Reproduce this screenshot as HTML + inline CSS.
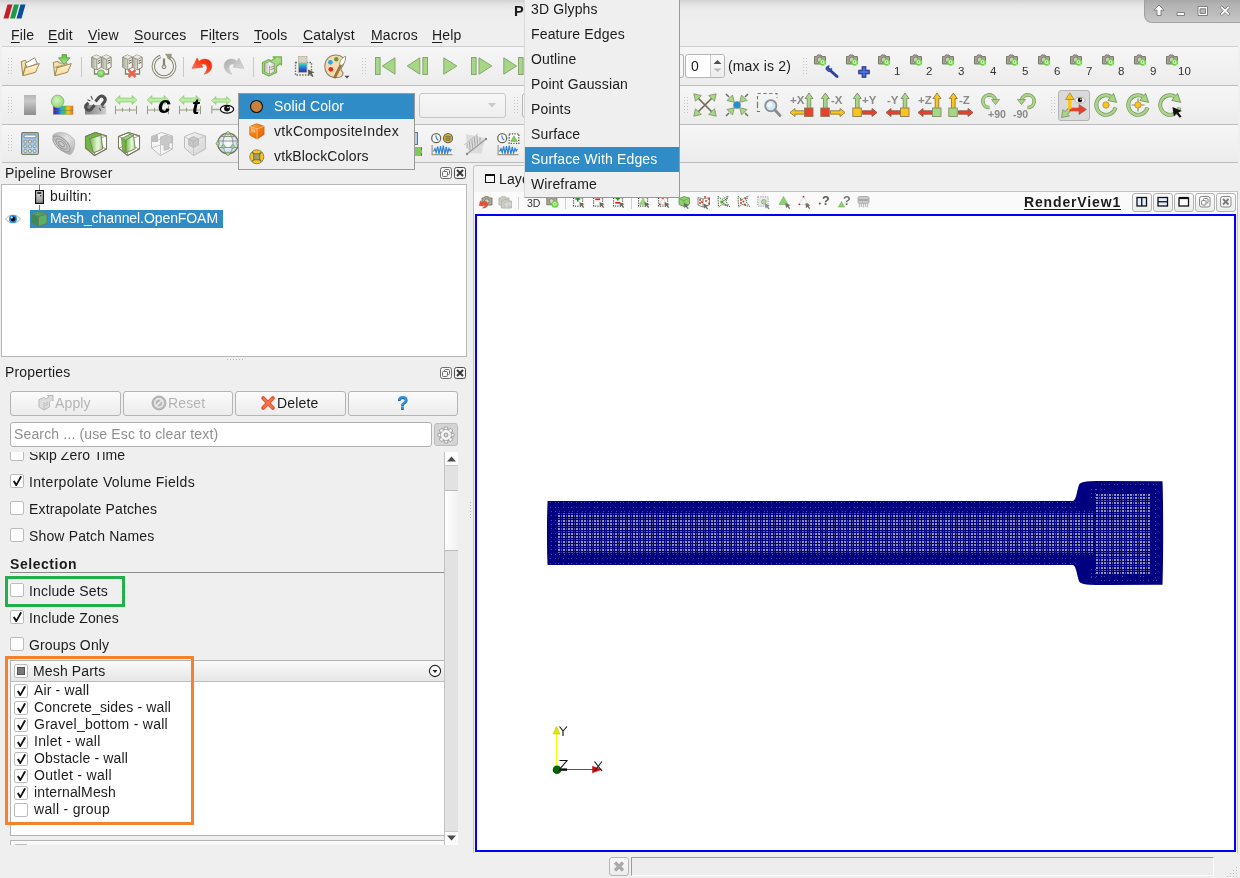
<!DOCTYPE html>
<html><head><meta charset="utf-8">
<style>
*{box-sizing:border-box;margin:0;padding:0}
html,body{width:1240px;height:878px;overflow:hidden;background:#efefef;font-family:"Liberation Sans",sans-serif;font-size:14px;letter-spacing:.15px;color:#1c1c1c}
.a{position:absolute}
.t{position:absolute;white-space:nowrap;line-height:16px;height:16px}
u{text-decoration:underline;text-underline-offset:2px;text-decoration-thickness:1px}
.hl{position:absolute;height:1px;background:#bdbdbd}
.hl2{position:absolute;height:1px;background:#fbfbfb}
svg{position:absolute;overflow:visible}
.btn{position:absolute;border:1px solid #b4b4b4;border-radius:3px;background:linear-gradient(#fbfbfb,#ececec)}
.cb{position:absolute;width:14px;height:14px;border:1px solid #bcbcbc;border-radius:2px;background:#fff}
.cb.c::after{content:"";position:absolute;left:2px;top:1px;width:9px;height:10px;background:#111;clip-path:polygon(0% 55%,18% 45%,38% 72%,80% 0%,100% 8%,42% 100%,30% 100%)}
.grip{position:absolute;width:5px;height:19px;background-image:radial-gradient(circle,#c4c4c4 0.7px,transparent 0.9px);background-size:3px 3px;}
.sel{background:#308cc6;color:#fff}
</style></head><body>
<div id="root" style="position:absolute;left:0;top:0;width:1240px;height:878px;will-change:transform">
<!-- TITLEBAR -->
<div class="a" id="titlebar" style="left:0;top:0;width:1240px;height:26px;background:linear-gradient(#d2d2d2 0,#e2e2e2 4px,#ececec 10px,#efefef 100%)"></div>
<svg style="left:3px;top:4px" width="24" height="16" viewBox="0 0 24 16"><path d="M4.5 0.5h5L5.5 14.5h-5z" fill="#c0202c"/><path d="M11 0.5h5L12 14.5h-5z" fill="#1d9a48"/><path d="M17.5 0.5h5L18.5 14.5h-5z" fill="#0a4f9e"/></svg>
<span class="t" style="left:514px;top:3px;font-weight:bold;font-size:14.6px">Pa</span>
<div class="a" style="left:1144px;top:0;width:96px;height:23px;background:linear-gradient(#a8a8a8,#b4b4b4 25%,#bcbcbc 60%,#c8c8c8);border-bottom-left-radius:8px;border-left:1px solid #9e9e9e;border-bottom:1px solid #a2a2a2"></div>
<svg style="left:1152px;top:3px" width="84" height="17" viewBox="0 0 84 17" fill="#fff" stroke="#777" stroke-width=".9" stroke-linejoin="round"><path d="M7 2L12 7.200H9V12.500H5V7.200H2z"/><rect x="25" y="9.500" width="7.500" height="3"/><path d="M46 3.500h9.500v9H46zM48 5.800v4.600h5.500V5.800z" fill-rule="evenodd"/><path d="M68 4.500L69.800 2.800L73 6L76.200 2.800L78 4.500L74.800 7.700L78 11L76.200 12.700L73 9.500L69.800 12.700L68 11L71.200 7.700z"/></svg>
<!-- MENUBAR -->
<div id="menubar">
<span class="t" style="left:11px;top:27px"><u>F</u>ile</span>
<span class="t" style="left:48px;top:27px"><u>E</u>dit</span>
<span class="t" style="left:88px;top:27px"><u>V</u>iew</span>
<span class="t" style="left:134px;top:27px"><u>S</u>ources</span>
<span class="t" style="left:200px;top:27px">Fi<u>l</u>ters</span>
<span class="t" style="left:254px;top:27px"><u>T</u>ools</span>
<span class="t" style="left:303px;top:27px"><u>C</u>atalyst</span>
<span class="t" style="left:371px;top:27px"><u>M</u>acros</span>
<span class="t" style="left:432px;top:27px"><u>H</u>elp</span>
</div>
<!-- TOOLBARS -->
<div id="toolbars">
<div class="a" style="left:2px;top:47px;width:1236px;height:38px;background:linear-gradient(#f6f6f6,#ececec)"></div>
<div class="a" style="left:2px;top:86px;width:1236px;height:38px;background:linear-gradient(#f6f6f6,#ececec)"></div>
<div class="a" style="left:2px;top:125px;width:1236px;height:37px;background:linear-gradient(#f6f6f6,#ececec)"></div>
<div class="hl" style="left:2px;top:46px;width:1236px;background:#cfcfcf"></div>
<div class="hl" style="left:2px;top:85px;width:1236px"></div>
<div class="hl" style="left:2px;top:124px;width:1236px"></div>
<div class="hl" style="left:2px;top:162px;width:1236px"></div>
<div class="grip" style="left:7px;top:57px"></div>
<div class="grip" style="left:7px;top:96px"></div>
<div class="grip" style="left:7px;top:134px"></div>
<div class="grip" style="left:361px;top:57px"></div>
<div class="grip" style="left:802px;top:57px"></div>
<div class="grip" style="left:683px;top:96px"></div>
<div class="grip" style="left:1050px;top:96px"></div>
<div class="grip" style="left:513px;top:96px"></div>
<!--TB1-->
<svg width="0" height="0" style="left:0;top:0"><defs>
<linearGradient id="gFold" x1="0" y1="0" x2="0" y2="1"><stop offset="0" stop-color="#fef4da"/><stop offset="1" stop-color="#fcd88c"/></linearGradient>
<linearGradient id="gSrv" x1="0" y1="0" x2="1" y2="0"><stop offset="0" stop-color="#b9b9a8"/><stop offset=".5" stop-color="#f4f4f0"/><stop offset="1" stop-color="#d3d3c6"/></linearGradient>
<radialGradient id="gGreenBall" cx=".45" cy=".4" r=".6"><stop offset="0" stop-color="#b5ec9a"/><stop offset="1" stop-color="#63c23f"/></radialGradient>
<linearGradient id="gGreenArr" x1="0" y1="0" x2="0" y2="1"><stop offset="0" stop-color="#4fc22b"/><stop offset="1" stop-color="#b7e7a2"/></linearGradient>
<linearGradient id="gRed" x1="0" y1="1" x2="1" y2="0"><stop offset="0" stop-color="#ff8c7a"/><stop offset=".6" stop-color="#ff3a14"/><stop offset="1" stop-color="#e02800"/></linearGradient>
<linearGradient id="gGrey" x1="0" y1="0" x2="1" y2="1"><stop offset="0" stop-color="#a9a9a9"/><stop offset="1" stop-color="#e4e4e4"/></linearGradient>
<linearGradient id="gJet" x1="0" y1="0" x2="0" y2="1"><stop offset="0" stop-color="#7fd88a"/><stop offset=".3" stop-color="#19b5d8"/><stop offset=".65" stop-color="#1f5fd0"/><stop offset="1" stop-color="#4b2d9a"/></linearGradient>
<g id="srv2">
 <path d="M3.500 14V20H17.500V14" fill="#fff" stroke="#80806a" stroke-width="1.300"/>
 <g id="twr"><path d="M.7 3.200L5.300 1L10.300 3.200V13.300L5.800 15.800L.7 13.300z" fill="#f6f6f2" stroke="#80806a" stroke-width="1" stroke-linejoin="round"/><path d="M.7 3.200L5.800 5.400V15.800L.7 13.300z" fill="url(#gSrvS)"/><path d="M.7 3.200L5.300 1L10.300 3.200L5.800 5.400z" fill="#e9e9e2"/><path d="M.7 3.200L5.800 5.400L10.300 3.200M5.800 5.400V15.800" fill="none" stroke="#80806a" stroke-width=".8"/><path d="M6.800 7.300l2.700-1.300M6.800 9.600l2.700-1.300" stroke="#6f6f5a" stroke-width="1.100"/></g>
 <use href="#twr" x="9.800"/>
</g>
<linearGradient id="gSrvS" x1="0" y1="0" x2="1" y2="0"><stop offset="0" stop-color="#a9a998"/><stop offset="1" stop-color="#dcdcd2"/></linearGradient>
<g id="vcrbar"><rect x=".5" y=".5" width="4.6" height="17" fill="#a5d785" stroke="#8ba374" stroke-width="1"/></g>
</defs></svg>
<!-- open -->
<svg style="left:18px;top:54px" width="24" height="24" viewBox="0 0 24 24">
 <path d="M3.2 7.5L7.5 6.3L8.5 8L4.8 21.2z" fill="#f8dfa6" stroke="#978b60" stroke-width="1"/>
 <path d="M7 9.5L16.5 3.8L19.5 9.5L9 13.5z" fill="#fff" stroke="#978b60" stroke-width="1"/>
 <path d="M7.2 13.8L21.3 9.6L17.5 18.3L4.8 21.8z" fill="url(#gFold)" stroke="#978b60" stroke-width="1" stroke-linejoin="round"/>
</svg>
<!-- open recent -->
<svg style="left:50px;top:54px" width="24" height="24" viewBox="0 0 24 24">
 <path d="M3.2 8.5L8 7.3L9 9H17V12L4.8 21.2z" fill="#f8dfa6" stroke="#978b60" stroke-width="1"/>
 <path d="M5.5 13.2L15 10.5V13z" fill="#fff" stroke="#978b60" stroke-width=".8"/>
 <path d="M7.2 13.8L21.3 9.6L17.5 18.3L4.8 21.8z" fill="url(#gFold)" stroke="#978b60" stroke-width="1" stroke-linejoin="round"/>
 <path d="M12 0.6h4.5V3.8H20L14.2 10.3L8.5 3.8H12z" fill="url(#gGreenArr)" stroke="#6f9a52" stroke-width=".9"/>
</svg>
<div class="a" style="left:81px;top:57px;width:1px;height:20px;background:#c9c9c9"></div>
<!-- connect -->
<svg style="left:90px;top:54px" width="22" height="24" viewBox="0 0 20 24"><use href="#srv2"/><circle cx="10" cy="19.5" r="3.7" fill="url(#gGreenBall)" stroke="#8aa870" stroke-width=".8"/></svg>
<!-- disconnect -->
<svg style="left:121px;top:54px" width="22" height="24" viewBox="0 0 20 24"><use href="#srv2"/><path d="M6.5 16l7 7M13.5 16l-7 7" stroke="#f0604a" stroke-width="2.6"/></svg>
<!-- timer -->
<svg style="left:151px;top:53px" width="26" height="26" viewBox="0 0 26 26" fill="none">
 <path d="M16.5 3.3A10.6 10.6 0 1 1 9.5 3.3" stroke="#85856f" stroke-width="3.4"/>
 <path d="M16.5 3.3A10.6 10.6 0 1 1 9.5 3.3" stroke="#f4f4ee" stroke-width="1.4"/>
 <path d="M14.5 1.2h6l-1.5 5.3z" fill="#9a9a84" stroke="#85856f" stroke-width=".6"/>
 <path d="M13 5.5v7.5" stroke="#85856f" stroke-width="2.2"/><circle cx="13" cy="13.8" r="1.9" fill="#d9d9cc" stroke="#85856f" stroke-width="1"/>
</svg>
<div class="a" style="left:183px;top:57px;width:1px;height:20px;background:#c9c9c9"></div>
<!-- undo -->
<svg style="left:190px;top:54px" width="24" height="24" viewBox="0 0 24 24"><path d="M2 14.500L7 4L9.200 7.200C13 3.500 21.500 4.500 21.800 11.500C22 16 18.500 19.500 14 20.200C16.500 17.500 17.500 14.500 16.800 12.500C16 10 13.500 9.500 11.300 10.600L13 13.200z" fill="url(#gRed)" stroke="#d0553a" stroke-width=".5"/></svg>
<!-- redo -->
<svg style="left:222px;top:54px" width="24" height="24" viewBox="0 0 24 24"><path d="M22 14.5 L17 4 L14.8 7.2 C11 3.5 2.5 4.5 2.2 11.5 C2 16 5.5 19.5 10 20.2 C7.5 17.5 6.5 14.5 7.2 12.5 C8 10 10.5 9.5 12.7 10.6 L11 13.2 z" fill="url(#gGrey)" stroke="#b9b9b9" stroke-width=".5"/></svg>
<div class="a" style="left:253px;top:57px;width:1px;height:20px;background:#c9c9c9"></div>
<!-- extract -->
<svg style="left:260px;top:54px" width="24" height="24" viewBox="0 0 24 24">
 <path d="M2.5 8.5L9 5.5L11 7L15 4.2L13 2.8H21.5V11L20 9.5L16.5 12.5V18.5L9 22L2.5 19z" fill="#a6da84" stroke="#72b548" stroke-width="1.2" stroke-linejoin="round"/>
 <path d="M4.5 9.5L9.5 7.5L14.5 9.5V18L9.5 20.200L4.500 18z" fill="url(#gSrv)" stroke="#8a8a78" stroke-width=".7"/>
 <path d="M9.5 11.5v8.500" stroke="#d06a6a" stroke-width=".7"/><path d="M10.5 13.300l3.500-1.300M10.500 15.600l3.500-1.300" stroke="#8a8a78" stroke-width=".9"/>
</svg>
<!-- color legend edit -->
<svg style="left:292px;top:54px" width="24" height="24" viewBox="0 0 24 24">
 <rect x="3.500" y="8.500" width="16" height="12.500" fill="none" stroke="#6e6e5c" stroke-width="1.400" stroke-dasharray="1.500 1.300"/>
 <rect x="6.500" y="8.500" width="8.500" height="10" fill="url(#gJet)"/><rect x="6.500" y="2.500" width="8.500" height="6" fill="#dbd3c0"/>
 <rect x="6.500" y="2.500" width="8.500" height="16" fill="none" stroke="#b9b4a3" stroke-width=".8"/>
 <path d="M16 15.500l6.500 3l-2.800.8l1.800 3l-1.400.8l-1.800-3l-2 2z" fill="#5e5e4c"/>
</svg>
<!-- palette -->
<svg style="left:323px;top:53px" width="28" height="27" viewBox="0 0 28 27">
 <path d="M12 2C18 1.500 21.500 5 21 9.500C20.600 13 18 14 18 16.500C18 18.500 20.500 18.500 20 21C19.500 23.500 16 24.800 12 24.500C5.500 24 1.800 19.500 1.800 13.500C1.800 7 6 2.500 12 2z" fill="#f6dbb0" stroke="#8d8569" stroke-width="1.100"/>
 <circle cx="7.400" cy="9.300" r="2.400" fill="#2aa6e0"/><circle cx="13.300" cy="6.200" r="2.200" fill="#5c9c32"/><circle cx="7.800" cy="16.300" r="2.400" fill="#e6281e"/>
 <path d="M10.500 24.500L17 11.500L18.800 12.500L12.500 25.300z" fill="#a9772f" stroke="#7d6a45" stroke-width=".6"/>
 <path d="M16.800 11.500C16.500 8 18.500 5 22.500 3.300C23 7 21.500 10.500 18.800 12.500z" fill="#fff" stroke="#8d8569" stroke-width=".9"/>
 <path d="M21.500 22.800h5l-2.500 2.600z" fill="#4a4a4a"/>
</svg>
<!-- VCR -->
<svg style="left:375px;top:57px" width="21" height="18" viewBox="0 0 21 18"><use href="#vcrbar"/><path d="M20 .8V17.200L7.300 9z" fill="#a5d785" stroke="#8ba374" stroke-width="1"/></svg>
<svg style="left:406px;top:57px" width="22" height="18" viewBox="0 0 22 18"><use href="#vcrbar" x="16.400"/><path d="M13.800 .8V17.200L1.200 9z" fill="#a5d785" stroke="#8ba374" stroke-width="1"/></svg>
<svg style="left:443px;top:57px" width="15" height="18" viewBox="0 0 15 18"><path d="M.8 .8V17.200L13.800 9z" fill="#a5d785" stroke="#8ba374" stroke-width="1"/></svg>
<svg style="left:471px;top:57px" width="22" height="18" viewBox="0 0 22 18"><use href="#vcrbar"/><path d="M8 .8V17.200L20.800 9z" fill="#a5d785" stroke="#8ba374" stroke-width="1"/></svg>
<svg style="left:503px;top:57px" width="21" height="18" viewBox="0 0 21 18"><path d="M.8 .8V17.200L13.500 9z" fill="#a5d785" stroke="#8ba374" stroke-width="1"/><use href="#vcrbar" x="15"/></svg>
<!--TB1b-->
<svg width="0" height="0" style="left:0;top:0"><defs>
<g id="cam"><path d="M.5 2.500h2.200l.8-1.500h3.500l.8 1.500h3.700v7.500H.5z" fill="#a3a38f" stroke="#7b7b66" stroke-width="1"/><circle cx="5.800" cy="5.800" r="2.700" fill="#c9c9bb" stroke="#7b7b66" stroke-width=".9"/><circle cx="8.800" cy="8.400" r="3.300" fill="#6fd24a"/><circle cx="8.500" cy="8" r="1.500" fill="none" stroke="#eaffdf" stroke-width=".9"/><path d="M9.600 9.200l1.500 1.500" stroke="#eaffdf" stroke-width="1"/></g>
</defs></svg>
<div class="a" style="left:680px;top:54px;width:4px;height:24px;border:1px solid #b4b4b4;border-left:none;border-radius:0 3px 3px 0;background:#f6f6f6"></div>
<div class="a" style="left:685px;top:54px;width:40px;height:24px;border:1px solid #b4b4b4;border-radius:3px;background:#fff"></div>
<div class="a" style="left:710px;top:55px;width:14px;height:22px;border-left:1px solid #c9c9c9;background:linear-gradient(#fbfbfb,#ececec);border-radius:0 2px 2px 0"></div>
<svg style="left:713px;top:59px" width="9" height="14" viewBox="0 0 9 14"><path d="M.5 5L4.500 1L8.500 5z" fill="#4d4d4d"/><path d="M.5 9.500L4.500 13L8.500 9.500z" fill="#b9b9b9"/></svg>
<span class="t" style="left:691px;top:58px">0</span>
<span class="t" style="left:728px;top:58px">(max is 2)</span>
<svg style="left:814px;top:54px" width="14" height="13" viewBox="0 0 14 13"><use href="#cam"/></svg>
<svg style="left:846px;top:54px" width="14" height="13" viewBox="0 0 14 13"><use href="#cam"/></svg>
<svg style="left:878px;top:54px" width="14" height="13" viewBox="0 0 14 13"><use href="#cam"/></svg>
<svg style="left:910px;top:54px" width="14" height="13" viewBox="0 0 14 13"><use href="#cam"/></svg>
<svg style="left:942px;top:54px" width="14" height="13" viewBox="0 0 14 13"><use href="#cam"/></svg>
<svg style="left:974px;top:54px" width="14" height="13" viewBox="0 0 14 13"><use href="#cam"/></svg>
<svg style="left:1006px;top:54px" width="14" height="13" viewBox="0 0 14 13"><use href="#cam"/></svg>
<svg style="left:1038px;top:54px" width="14" height="13" viewBox="0 0 14 13"><use href="#cam"/></svg>
<svg style="left:1070px;top:54px" width="14" height="13" viewBox="0 0 14 13"><use href="#cam"/></svg>
<svg style="left:1102px;top:54px" width="14" height="13" viewBox="0 0 14 13"><use href="#cam"/></svg>
<svg style="left:1134px;top:54px" width="14" height="13" viewBox="0 0 14 13"><use href="#cam"/></svg>
<svg style="left:1166px;top:54px" width="14" height="13" viewBox="0 0 14 13"><use href="#cam"/></svg>
<svg style="left:825px;top:65px" width="15" height="14" viewBox="0 0 15 14"><path d="M2.500 3l9.500 8.500" stroke="#2c3f9e" stroke-width="3" stroke-linecap="round"/><path d="M1 4.500A3 3 0 0 1 4.500 .8L3 3l1.500 1.500L6.800 3.200A3 3 0 0 1 3 6.500z" fill="#3b56c4" stroke="#22307e" stroke-width=".6"/></svg>
<svg style="left:858px;top:66px" width="12" height="12" viewBox="0 0 12 12"><path d="M4.200 .8h3.600v3.400h3.400v3.600H7.800v3.400H4.200V7.800H.8V4.200h3.400z" fill="#4d6fdc" stroke="#1f2c86" stroke-width="1.100"/></svg>
<span class="t" style="left:894px;top:63px;font-size:11.500px;letter-spacing:0;color:#333">1</span>
<span class="t" style="left:926px;top:63px;font-size:11.500px;letter-spacing:0;color:#333">2</span>
<span class="t" style="left:958px;top:63px;font-size:11.500px;letter-spacing:0;color:#333">3</span>
<span class="t" style="left:990px;top:63px;font-size:11.500px;letter-spacing:0;color:#333">4</span>
<span class="t" style="left:1022px;top:63px;font-size:11.500px;letter-spacing:0;color:#333">5</span>
<span class="t" style="left:1054px;top:63px;font-size:11.500px;letter-spacing:0;color:#333">6</span>
<span class="t" style="left:1086px;top:63px;font-size:11.500px;letter-spacing:0;color:#333">7</span>
<span class="t" style="left:1118px;top:63px;font-size:11.500px;letter-spacing:0;color:#333">8</span>
<span class="t" style="left:1150px;top:63px;font-size:11.500px;letter-spacing:0;color:#333">9</span>
<span class="t" style="left:1178px;top:63px;font-size:11.500px;letter-spacing:0;color:#333">10</span>
<!--/TB1-->
<!--TB2-->
<svg width="0" height="0" style="left:0;top:0"><defs>
<linearGradient id="gDis" x1="0" y1="0" x2="0" y2="1"><stop offset="0" stop-color="#b5b5b5"/><stop offset=".3" stop-color="#c9c9c9"/><stop offset="1" stop-color="#8c8c8c"/></linearGradient>
<linearGradient id="gRain" x1="0" y1="0" x2="1" y2="0"><stop offset="0" stop-color="#5a1aa0"/><stop offset=".22" stop-color="#1d4fd8"/><stop offset=".42" stop-color="#18b4e8"/><stop offset=".58" stop-color="#4fbf3a"/><stop offset=".75" stop-color="#f4c818"/><stop offset="1" stop-color="#f46a12"/></linearGradient>
<linearGradient id="gArrG" x1="0" y1="0" x2="0" y2="1"><stop offset="0" stop-color="#7fd25c"/><stop offset=".5" stop-color="#c4efae"/><stop offset="1" stop-color="#7fd25c"/></linearGradient>
<radialGradient id="gGreenBall2" cx=".45" cy=".4" r=".65"><stop offset="0" stop-color="#d2f3c2"/><stop offset="1" stop-color="#8fd56e"/></radialGradient><g id="resc"><path d="M.5 5L5.500 .5V3h12V.5L22.500 5L17.500 9.500V7h-12v2.500z" fill="url(#gArrG)" stroke="#8fce72" stroke-width=".6"/><path d="M1 15h21M1 10.800v8.400M22 10.800v8.400M8 12.800v4M15 12.800v4" stroke="#9a9a86" stroke-width="1" fill="none"/></g>
<g id="upG"><path d="M4.500 .5L8.500 6H6.300V16H2.700V6H.5z" fill="#a5d785" stroke="#7d8f68" stroke-width=".9"/></g>
<g id="upY"><path d="M4.500 .5L8.500 6H6.300V16H2.700V6H.5z" fill="#fcc419" stroke="#8a7a4a" stroke-width=".9"/></g>
<g id="arY"><path d="M.5 4.500L5.500 .5V2.800H15V6.200H5.500V8.500z" fill="#fcc419" stroke="#8a7a4a" stroke-width=".9"/></g>
<g id="arR"><path d="M.5 4.500L5.500 .5V2.800H15V6.200H5.500V8.500z" fill="#e8402c" stroke="#8a5a4a" stroke-width=".9"/></g>
<g id="ring"><path d="M21.500 14.500A9.800 9.800 0 1 1 17.600 3.960" fill="none" stroke="#7d8f68" stroke-width="3.900"/><path d="M19.600 .4L22.600 9.400L13.800 7.400z" fill="#a5d785" stroke="#7d8f68" stroke-width=".9" stroke-linejoin="round"/><path d="M21.400 14.800A9.800 9.800 0 1 1 17.300 3.800" fill="none" stroke="#a5d785" stroke-width="2.500"/></g>
</defs></svg>
<svg style="left:24px;top:95px" width="12" height="20"><rect width="12" height="20" fill="url(#gDis)"/></svg>
<svg style="left:50px;top:94px" width="24" height="22" viewBox="0 0 24 22"><rect x="3.200" y="12" width="19.800" height="8.400" fill="url(#gRain)" stroke="#9a8a6a" stroke-width=".5"/><path d="M3.200 16.500h19.800" stroke="#6a6a5a" stroke-width=".7" opacity=".6"/><circle cx="7.600" cy="7.400" r="6.300" fill="url(#gGreenBall2)" stroke="#8fae74" stroke-width=".8"/></svg>
<svg style="left:84px;top:93px" width="24" height="23" viewBox="0 0 24 23"><defs><linearGradient id="gLk" x1="0" y1="0" x2="1" y2="0"><stop offset="0" stop-color="#7d7d7d"/><stop offset="1" stop-color="#cfcfcf"/></linearGradient></defs><rect x="1" y="12" width="21" height="9.500" fill="url(#gLk)"/><path d="M11.500 8.500L15 4.200A3.600 3.600 0 0 1 20.500 8.800L17.500 12.500" fill="none" stroke="#4e4e4e" stroke-width="3"/><path d="M10.500 12L7 16.500A3.400 3.400 0 0 1 2 12.200L4.500 9.800" fill="none" stroke="#4e4e4e" stroke-width="3"/><path d="M8.500 6.500L7 3M6.500 8L3.500 6.800M15.500 15l1.200 3M17.500 13.500l3 1.200" stroke="#555" stroke-width="1.100"/></svg>
<svg style="left:114px;top:95px" width="24" height="20" viewBox="0 0 23 20"><use href="#resc"/></svg>
<svg style="left:146px;top:95px" width="24" height="20" viewBox="0 0 23 20"><use href="#resc"/></svg>
<span class="t" style="left:158px;top:94px;font-size:23px;line-height:22px;height:22px;font-weight:bold;font-style:italic;color:#000;letter-spacing:0">c</span>
<svg style="left:178px;top:95px" width="24" height="20" viewBox="0 0 23 20"><use href="#resc"/></svg>
<span class="t" style="left:192px;top:96px;font-size:22px;line-height:22px;height:22px;font-weight:bold;font-style:italic;color:#000;letter-spacing:0">t</span>
<svg style="left:211px;top:96px" width="24" height="20" viewBox="0 0 24 20"><path d="M.5 4.500L5 .5V2.800h10.500V.5L20 4.500L15.500 8.500V6.200H5v2.300z" fill="url(#gArrG)" stroke="#8fce72" stroke-width=".6"/><path d="M.8 13.500h8M.8 9.500v8" stroke="#a9a994" stroke-width="1.300"/><ellipse cx="16" cy="13.200" rx="6.600" ry="3.900" fill="#fff" stroke="#111" stroke-width="1.300"/><circle cx="16" cy="12.500" r="2.900" fill="#111"/><circle cx="17" cy="11.500" r=".8" fill="#fff"/></svg>
<!-- disabled combo -->
<div class="a" style="left:419px;top:93px;width:87px;height:25px;border:1px solid #c6c6c6;border-radius:3px;background:linear-gradient(#f7f7f7,#eeeeee)"></div>
<svg style="left:488px;top:103px" width="8" height="5" viewBox="0 0 8 5"><path d="M0 0h8L4 4.500z" fill="#c9c9c9"/></svg>
<div class="a" style="left:522px;top:93px;width:10px;height:25px;border:1px solid #b4b4b4;border-radius:3px;background:#f6f6f6"></div>
<!-- camera controls -->
<svg style="left:693px;top:93px" width="24" height="24" viewBox="0 0 24 24"><path d="M4 4L20 20M20 4L4 20" stroke="#6d6d58" stroke-width="1.700"/><g fill="#a5d785" stroke="#7d8f68" stroke-width=".8"><path d="M.8 .8L8.300 2.500L2.500 8.300z"/><path d="M23.200 .8L15.700 2.500L21.500 8.300z"/><path d="M.8 23.200L8.300 21.500L2.500 15.700z"/><path d="M23.200 23.200L15.700 21.500L21.500 15.700z"/></g></svg>
<svg style="left:725px;top:93px" width="24" height="24" viewBox="0 0 24 24"><g stroke="#6d6d58" stroke-width="1.500"><path d="M1 1L4 4M23 1L20 4M1 23L4 20M23 23L20 20"/></g><g fill="#a5d785" stroke="#7d8f68" stroke-width=".8"><path d="M9.300 9.300L2 7.500L7.500 2z"/><path d="M14.700 9.300L22 7.500L16.500 2z"/><path d="M9.300 14.700L2 16.500L7.500 22z"/><path d="M14.700 14.700L22 16.500L16.500 22z"/></g><circle cx="12" cy="12" r="3.600" fill="#1e8fd6" stroke="#8d8d78" stroke-width=".7"/></svg>
<svg style="left:756px;top:92px" width="26" height="26" viewBox="0 0 26 26"><path d="M1.500 13V1.500H21V6" fill="none" stroke="#77776a" stroke-width="1.200" stroke-dasharray="3.200 2.600"/><path d="M1.500 13v6.500H6" fill="none" stroke="#77776a" stroke-width="1.200" stroke-dasharray="3.200 2.600"/><path d="M18.500 17.500L24 23.500" stroke="#8a8a8a" stroke-width="2.800" stroke-linecap="round"/><circle cx="14.800" cy="13.700" r="5.600" fill="#cfe9fb" stroke="#8f8f8f" stroke-width="1.800"/><circle cx="13.800" cy="12.700" r="2.500" fill="#eef8ff"/></svg>
<span class="t" style="left:790px;top:94px;font-size:11.500px;font-weight:bold;letter-spacing:0;color:#8a8a8a;line-height:12px;height:12px">+X</span>
<svg style="left:789px;top:92px" width="25" height="26" viewBox="0 0 25 26"><use href="#upG" x="15.500" y=".5"/><use href="#arY" x=".5" y="16"/><rect x="15.500" y="16" width="8.500" height="8.500" fill="#e8402c" stroke="#8a7a5a" stroke-width=".9"/></svg>
<span class="t" style="left:831px;top:94px;font-size:11.500px;font-weight:bold;letter-spacing:0;color:#8a8a8a;line-height:12px;height:12px">-X</span>
<svg style="left:820px;top:92px" width="26" height="26" viewBox="0 0 26 26"><use href="#upG" x=".8" y=".5"/><g transform="translate(25.500 16) scale(-1 1)"><use href="#arY"/></g><rect x=".8" y="16" width="8.500" height="8.500" fill="#e8402c" stroke="#8a7a5a" stroke-width=".9"/></svg>
<span class="t" style="left:862px;top:94px;font-size:11.500px;font-weight:bold;letter-spacing:0;color:#8a8a8a;line-height:12px;height:12px">+Y</span>
<svg style="left:852px;top:92px" width="26" height="26" viewBox="0 0 26 26"><use href="#upG" x=".8" y=".5"/><g transform="translate(25.500 16) scale(-1 1)"><use href="#arR"/></g><rect x=".8" y="16" width="8.500" height="8.500" fill="#fcc419" stroke="#8a7a5a" stroke-width=".9"/></svg>
<span class="t" style="left:887px;top:94px;font-size:11.500px;font-weight:bold;letter-spacing:0;color:#8a8a8a;line-height:12px;height:12px">-Y</span>
<svg style="left:885px;top:92px" width="25" height="26" viewBox="0 0 25 26"><use href="#upG" x="15.500" y=".5"/><use href="#arR" x=".5" y="16"/><rect x="15.500" y="16" width="8.500" height="8.500" fill="#fcc419" stroke="#8a7a5a" stroke-width=".9"/></svg>
<span class="t" style="left:918px;top:94px;font-size:11.500px;font-weight:bold;letter-spacing:0;color:#8a8a8a;line-height:12px;height:12px">+Z</span>
<svg style="left:917px;top:92px" width="25" height="26" viewBox="0 0 25 26"><use href="#upY" x="15.500" y=".5"/><use href="#arR" x=".5" y="16"/><rect x="15.500" y="16" width="8.500" height="8.500" fill="#a5d785" stroke="#7d8f68" stroke-width=".9"/></svg>
<span class="t" style="left:959px;top:94px;font-size:11.500px;font-weight:bold;letter-spacing:0;color:#8a8a8a;line-height:12px;height:12px">-Z</span>
<svg style="left:948px;top:92px" width="26" height="26" viewBox="0 0 26 26"><use href="#upY" x=".8" y=".5"/><g transform="translate(25.500 16) scale(-1 1)"><use href="#arR"/></g><rect x=".8" y="16" width="8.500" height="8.500" fill="#a5d785" stroke="#7d8f68" stroke-width=".9"/></svg>
<svg style="left:980px;top:92px" width="20" height="18" viewBox="0 0 20 18"><path d="M9.500 15.500A6.300 6.300 0 1 1 15.300 8" fill="none" stroke="#7d8f68" stroke-width="3.600"/><path d="M9.500 15.500A6.300 6.300 0 1 1 15.300 8" fill="none" stroke="#a5d785" stroke-width="2.300"/><path d="M11.500 7.500h8L15.500 12.500z" fill="#a5d785" stroke="#7d8f68" stroke-width=".8"/></svg>
<span class="t" style="left:988px;top:108px;font-size:10.500px;font-weight:bold;letter-spacing:0;color:#8a8a8a;line-height:12px;height:12px">+90</span>
<svg style="left:1017px;top:92px" width="20" height="18" viewBox="0 0 20 18"><g transform="translate(20 0) scale(-1 1)"><path d="M9.500 15.500A6.300 6.300 0 1 1 15.300 8" fill="none" stroke="#7d8f68" stroke-width="3.600"/><path d="M9.500 15.500A6.300 6.300 0 1 1 15.300 8" fill="none" stroke="#a5d785" stroke-width="2.300"/><path d="M11.500 7.500h8L15.500 12.500z" fill="#a5d785" stroke="#7d8f68" stroke-width=".8"/></g></svg>
<span class="t" style="left:1013px;top:108px;font-size:10.500px;font-weight:bold;letter-spacing:0;color:#8a8a8a;line-height:12px;height:12px">-90</span>
<div class="a" style="left:1058px;top:90px;width:32px;height:31px;background:#dadada;border:1px solid #b3b3b3;border-radius:3px"></div>
<svg style="left:1060px;top:92px" width="28" height="27" viewBox="0 0 28 27"><path d="M11.500 15.500L4 23" stroke="#7d8f68" stroke-width="4.200"/><path d="M1.500 25.500L3 17.500L9.500 24z" fill="#a5d785" stroke="#7d8f68" stroke-width=".8"/><path d="M11.500 15.500L4.500 22.500" stroke="#a5d785" stroke-width="2.800"/><path d="M9.500 17.500h10" stroke="#e8402c" stroke-width="3.600"/><path d="M19 12.500L26.500 17.500L19 22.500z" fill="#e8402c" stroke="#8a5a4a" stroke-width=".6"/><path d="M9.800 17V6" stroke="#fcc419" stroke-width="3.400"/><path d="M5.500 7.500L9.800 .8L14 7.500z" fill="#fcc419" stroke="#8a7a4a" stroke-width=".7"/><ellipse cx="20" cy="8.200" rx="5" ry="2.900" fill="#fff" stroke="#999" stroke-width=".8"/><circle cx="20" cy="8" r="2.300" fill="#111"/><circle cx="20.800" cy="7.200" r=".7" fill="#fff"/></svg>
<svg style="left:1094px;top:93px" width="24" height="24" viewBox="0 0 24 24"><use href="#ring"/><circle cx="12" cy="12" r="3.200" fill="#fcc419" stroke="#9a8a4a" stroke-width=".7"/></svg>
<svg style="left:1126px;top:93px" width="24" height="24" viewBox="0 0 24 24"><use href="#ring"/><path d="M12 5.500v13M5.500 12h13" stroke="#8a8f68" stroke-width="1.200"/><circle cx="12" cy="12" r="3.200" fill="#fcc419" stroke="#9a8a4a" stroke-width=".7"/></svg>
<svg style="left:1158px;top:93px" width="26" height="26" viewBox="0 0 26 26"><use href="#ring"/><path d="M14.500 14l9.500 4l-3.800 1.200l3.300 4.300l-1.800 1.300l-3.300-4.400l-2.600 2.800z" fill="#111"/></svg>
<!--/TB2-->
<!--TB3-->
<svg width="0" height="0" style="left:0;top:0"><defs>
<linearGradient id="gCalc" x1="0" y1="0" x2="0" y2="1"><stop offset="0" stop-color="#8fc2ee"/><stop offset="1" stop-color="#c4e0f7"/></linearGradient>
<radialGradient id="gCont" cx=".65" cy=".3" r=".8"><stop offset="0" stop-color="#e6e6e6"/><stop offset="1" stop-color="#a6a6a6"/></radialGradient>
<linearGradient id="gCubeG" x1="0" y1="0" x2="1" y2="0"><stop offset="0" stop-color="#6fba3e"/><stop offset=".65" stop-color="#eaf8e0"/><stop offset="1" stop-color="#9fd884"/></linearGradient>
<linearGradient id="gCubeGr" x1="0" y1="0" x2="1" y2="1"><stop offset="0" stop-color="#f6f6f6"/><stop offset="1" stop-color="#d2d2d2"/></linearGradient>
<radialGradient id="gSph" cx=".5" cy=".45" r=".6"><stop offset="0" stop-color="#ffffff"/><stop offset="1" stop-color="#b9d9f4"/></radialGradient>
<g id="plotb"><path d="M.6 0v9.600H21" fill="none" stroke="#9a9a84" stroke-width="1.200"/><path d="M2 6.500l1.500-3l1.200 4l1.500-6l1.300 7.500l1.500-8l1.400 8l1.400-8.500l1.500 8.500l1.500-7l1.300 6l1.400-4.500l1.200 2.500l1.300-2" fill="none" stroke="#2f82d6" stroke-width="1.200"/></g>
<g id="clk"><circle cx="5.200" cy="5.200" r="4.500" fill="#fff" stroke="#6b6b55" stroke-width="1.300"/><path d="M4.800 2.300l.6 3.200l1.800 1.800" fill="none" stroke="#3b8ae0" stroke-width="1.300"/></g>
</defs></svg>
<!-- calculator -->
<svg style="left:21px;top:132px" width="18" height="23" viewBox="0 0 18 23"><rect x=".6" y=".6" width="16.800" height="21.800" rx="1.500" fill="url(#gCalc)" stroke="#7b7b66" stroke-width="1.200"/><rect x="3" y="3" width="12" height="2.800" rx="1.200" fill="#fff" stroke="#7b7b66" stroke-width=".9"/><g fill="#dcecf8" stroke="#7b7b66" stroke-width=".8"><rect x="3" y="8.200" width="2.800" height="2.800" rx=".6"/><rect x="7.600" y="8.200" width="2.800" height="2.800" rx=".6"/><rect x="12.200" y="8.200" width="2.800" height="2.800" rx=".6"/><rect x="3" y="12.900" width="2.800" height="2.800" rx=".6"/><rect x="7.600" y="12.900" width="2.800" height="2.800" rx=".6"/><rect x="12.200" y="12.900" width="2.800" height="2.800" rx=".6"/><rect x="3" y="17.600" width="2.800" height="2.800" rx=".6"/><rect x="7.600" y="17.600" width="2.800" height="2.800" rx=".6"/><rect x="12.200" y="17.600" width="2.800" height="2.800" rx=".6"/></g></svg>
<!-- contour -->
<svg style="left:51px;top:131px" width="25" height="25" viewBox="0 0 25 25"><path d="M1.500 4.500C6 -.5 17 .5 23 8.500C24.500 11 24 20 19.500 23.500C15 24.500 3.500 13.500 1.500 4.500z" fill="url(#gCont)" stroke="#b7b7b7" stroke-width=".8"/><g fill="none" stroke="#9a9a9a" stroke-width="1" transform="rotate(42 10.500 13)"><ellipse cx="10.500" cy="13" rx="10.500" ry="5.200"/><ellipse cx="10.500" cy="13" rx="7" ry="3.400"/><ellipse cx="10.500" cy="13" rx="3.600" ry="1.700"/></g></svg>
<!-- clip -->
<svg style="left:84px;top:131px" width="24" height="26" viewBox="0 0 24 26"><path d="M1.500 5.500L11.500 1.500L22.500 5V18L10.500 24.500L1.500 17z" fill="#fff" stroke="#7d7d64" stroke-width="1"/><path d="M1.500 5.500L10.500 9L22.500 5M10.500 9V24.500M1.500 17L12 13.500L22.500 18M12 13.500V1.500" fill="none" stroke="#8d8d74" stroke-width=".8"/><path d="M1.500 5.500L11.500 1.500L17 3.300L18.500 18L9.500 21.800L1.500 16.800z" fill="#6fba3e" stroke="#6a7a52" stroke-width=".6"/><path d="M5.500 7.800L17 4.200L18.500 18L9.500 21.800z" fill="url(#gCubeG)" stroke="#7d7d64" stroke-width=".9"/><path d="M1.500 5.500L11.500 1.500L22.500 5V18L10.500 24.500L1.500 17z" fill="none" stroke="#7d7d64" stroke-width="1.100"/></svg>
<!-- slice -->
<svg style="left:117px;top:131px" width="24" height="26" viewBox="0 0 24 26"><path d="M1.500 5.500L11.500 1.500L22.500 5V18L10.500 24.500L1.500 17z" fill="#fff" stroke="#7d7d64" stroke-width="1"/><path d="M1.500 5.500L10.500 9L22.500 5M10.500 9V24.500M1.500 17L12 13.500L22.500 18M12 13.500V1.500" fill="none" stroke="#8d8d74" stroke-width=".8"/><path d="M4.500 7.300L8.800 9.200L9 21.800L5.500 19.500z" fill="#6fba3e" stroke="#6a7a52" stroke-width=".6"/><path d="M8.800 9.200L16.500 4.500L18.200 17.800L9 21.800z" fill="url(#gCubeG)" stroke="#7d7d64" stroke-width=".9"/><path d="M4.500 7.300L13 3.300L16.500 4.500L8.800 9.200z" fill="#8fd070" stroke="#7d7d64" stroke-width=".7"/><path d="M1.500 5.500L11.500 1.500L22.500 5V18L10.500 24.500L1.500 17z" fill="none" stroke="#7d7d64" stroke-width="1.100"/></svg>
<!-- threshold (grey) -->
<svg style="left:150px;top:131px" width="24" height="26" viewBox="0 0 24 26"><path d="M1.500 5.500L11.500 1.500L22.500 5V18L10.500 24.500L1.500 17z" fill="#f7f7f7" stroke="#bdbdbd" stroke-width="1"/><path d="M2 5.500L8 3.500V11H2z" fill="#bdbdbd"/><path d="M10.500 6L16 4L22 6.500V12H19V18L14 19.500V13.500H10.500z" fill="#c9c9c9" stroke="#b0b0b0" stroke-width=".6"/><path d="M1.500 5.500L10.500 9L22.500 5M10.500 9V24.500M1.500 17L12 13.500L22.500 18" fill="none" stroke="#c4c4c4" stroke-width=".9"/></svg>
<!-- extract subset (grey) -->
<svg style="left:183px;top:131px" width="24" height="26" viewBox="0 0 24 26"><path d="M1.500 5.500L11.500 1.500L22.500 5V18L10.500 24.500L1.500 17z" fill="url(#gCubeGr)" stroke="#bdbdbd" stroke-width="1"/><path d="M5.500 8L10.500 5.500L15.500 8V14L10.500 16.500L5.500 14z" fill="#c6c6c6" stroke="#b2b2b2" stroke-width=".7"/><path d="M10.500 10.500V16.500M5.500 8L10.500 10.500L15.500 8" fill="none" stroke="#b2b2b2" stroke-width=".7"/><path d="M10.500 16.500V24.500M1.500 5.500L5.500 8M22.500 5L15.500 8" fill="none" stroke="#c4c4c4" stroke-width=".9"/></svg>
<!-- glyph sphere -->
<svg style="left:216px;top:131px" width="24" height="25" viewBox="0 0 24 25"><circle cx="12" cy="12.500" r="10.300" fill="url(#gSph)" stroke="#77775f" stroke-width="1.200"/><g fill="none" stroke="#8a8a74" stroke-width=".9"><ellipse cx="12" cy="12.500" rx="5" ry="10.300"/><path d="M2 10h20M3 16.500h18M4.500 5.500h15"/></g><g fill="#a5d785" stroke="#7d8f68" stroke-width=".7"><circle cx="12" cy="2.300" r="1.700"/><circle cx="12" cy="22.800" r="1.700"/><circle cx="1.800" cy="12.500" r="1.700"/><circle cx="7.300" cy="15.500" r="1.700"/><circle cx="16.800" cy="15.500" r="1.700"/><circle cx="22.200" cy="12.500" r="1.700"/></g></svg>
<!-- between popups -->
<div class="a" style="left:415px;top:132px;width:3px;height:13px;background:#a9cdf0;border:1px solid #77776a;border-left:none"></div>
<div class="a" style="left:415px;top:147px;width:7px;height:9px;background:#7ec95a;border-right:1px dashed #6b7a55"></div>
<svg style="left:431px;top:133px" width="24" height="23" viewBox="0 0 24 23"><use href="#clk"/><circle cx="17" cy="5.200" r="4.500" fill="#fcc419" stroke="#6b6b55" stroke-width="1.300"/><rect x="14.800" y="3" width="4.400" height="4.400" fill="#9a8a5a" stroke="#6b6b55" stroke-width=".6"/><use href="#plotb" x=".5" y="12"/></svg>
<svg style="left:463px;top:133px" width="25" height="23" viewBox="0 0 25 23"><path d="M2.500 1L22 5L18.500 20.500L5.500 20z" fill="#dcdcdc"/><path d="M4 21L23 6" stroke="#9a9a9a" stroke-width="1.200"/><path d="M1 12L15 1" stroke="#b4b4b4" stroke-width=".8"/><g stroke="#a4a4a4" stroke-width=".9"><path d="M4 15.500v-5M6.500 13.500v-5M9 11.500v-5M11.500 9.500v-5M14 7.500v-5M7 17.500v-5M9.500 15.500v-5M12 13.500v-5M14.500 11.500v-5M17 9.500v-5"/></g><circle cx="4" cy="21" r="1.200" fill="#8a8a8a"/><circle cx="23" cy="6" r="1.200" fill="#8a8a8a"/></svg>
<svg style="left:497px;top:133px" width="24" height="23" viewBox="0 0 24 23"><use href="#clk"/><rect x="12.200" y=".8" width="9.600" height="9.600" fill="#fff" stroke="#55554a" stroke-width="1.300" stroke-dasharray="1.300 1.300"/><path d="M17 2.800L20.300 8.400H13.700z" fill="#7ccf58" stroke="#5fae3e" stroke-width=".6"/><use href="#plotb" x=".5" y="12"/></svg>
<!--/TB3-->
</div>
<!-- LEFT PANEL -->
<div id="left">
<span class="t" style="left:5px;top:165px">Pipeline Browser</span>
<div class="a" style="left:1px;top:184px;width:466px;height:173px;background:#fff;border:1px solid #b9b9b9"></div>
<span class="t" style="left:50px;top:188px">builtin:</span>
<div class="a sel" style="left:30px;top:210px;width:193px;height:18px"></div>
<span class="t" style="left:50px;top:210px;color:#fff;letter-spacing:-.08px">Mesh_channel.OpenFOAM</span>
<span class="t" style="left:5px;top:364px">Properties</span>
<div class="btn" style="left:10px;top:391px;width:111px;height:25px"></div>
<div class="btn" style="left:123px;top:391px;width:110px;height:25px"></div>
<div class="btn" style="left:235px;top:391px;width:111px;height:25px"></div>
<div class="btn" style="left:348px;top:391px;width:110px;height:25px"></div>
<span class="t" style="left:55px;top:395px;color:#b4b4b4">Apply</span>
<span class="t" style="left:168px;top:395px;color:#b4b4b4">Reset</span>
<span class="t" style="left:277px;top:395px">Delete</span>
<div class="a" style="left:10px;top:422px;width:422px;height:25px;background:#fff;border:1px solid #b0b0b0;border-radius:3px"></div>
<span class="t" style="left:14px;top:426px;color:#8f8f8f">Search ... (use Esc to clear text)</span>
<div class="a" style="left:434px;top:423px;width:24px;height:23px;background:#d4d4d4;border:1px solid #bdbdbd;border-radius:3px"></div>
<!--LEFTICONS-->
<svg width="0" height="0" style="left:0;top:0"><defs>
<g id="dockf"><rect x=".5" y=".5" width="11" height="11" rx="2" fill="#f4f4f4" stroke="#6e6e6e" stroke-width="1"/><rect x="4.500" y="2.500" width="5" height="5" rx="1" fill="none" stroke="#6e6e6e" stroke-width="1"/><rect x="2.500" y="4.500" width="5" height="5" rx="1" fill="#f4f4f4" stroke="#6e6e6e" stroke-width="1"/></g>
<g id="dockx"><rect x=".5" y=".5" width="11" height="11" rx="2" fill="#f4f4f4" stroke="#4a4a4a" stroke-width="1"/><path d="M3 3l6 6M9 3l-6 6" stroke="#333" stroke-width="1.900"/></g>
</defs></svg>
<svg style="left:440px;top:167px" width="12" height="12"><use href="#dockf"/></svg>
<svg style="left:454px;top:167px" width="12" height="12"><use href="#dockx"/></svg>
<svg style="left:440px;top:367px" width="12" height="12"><use href="#dockf"/></svg>
<svg style="left:454px;top:367px" width="12" height="12"><use href="#dockx"/></svg>
<!-- tree lines -->
<div class="a" style="left:39px;top:185px;width:1px;height:5px;background:#7a7a7a"></div>
<div class="a" style="left:39px;top:205px;width:1px;height:6px;background:#7a7a7a"></div>
<svg style="left:35px;top:190px" width="9" height="14" viewBox="0 0 9 14"><defs><linearGradient id="gBi" x1="0" y1="0" x2="0" y2="1"><stop offset="0" stop-color="#f2f2f2"/><stop offset="1" stop-color="#8a8a8a"/></linearGradient></defs><rect x=".6" y=".6" width="7.800" height="12.800" fill="url(#gBi)" stroke="#111" stroke-width="1.200"/><rect x="2.200" y="2.200" width="4.200" height="1.600" fill="#111"/><circle cx="5.800" cy="5.800" r=".7" fill="#111"/></svg>
<!-- eye -->
<svg style="left:5px;top:213px" width="16" height="12" viewBox="0 0 16 12"><path d="M.6 6C4 .8 12 .8 15.400 6C12 11.200 4 11.200 .6 6z" fill="#fff" stroke="#9a9a9a" stroke-width=".8"/><circle cx="8" cy="6" r="4" fill="#1e8fe8"/><circle cx="8" cy="6" r="2.400" fill="#0a0a14"/><circle cx="6.800" cy="4.600" r="1" fill="#fff"/></svg>
<!-- cube -->
<svg style="left:31px;top:211px" width="17" height="16" viewBox="0 0 17 16"><path d="M.8 3.300L6.500 .8L16 2.800V12.500L7.500 15.400L.8 11.800z" fill="#56b366" stroke="#6d7360" stroke-width="1"/><path d="M.8 3.300L7.500 5.500V15.400L.8 11.800z" fill="#3f8a52"/><path d="M.8 3.300L6.500 .8L16 2.800L7.500 5.500z" fill="#4ba35c"/><path d="M.8 3.300L7.500 5.500L16 2.800M7.500 5.500V15.400" fill="none" stroke="#6d7360" stroke-width=".8"/></svg>
<!-- apply icon -->
<svg style="left:38px;top:394px" width="16" height="17" viewBox="0 0 16 17"><path d="M1 5.500L6 3.500L8 5L11 2.800L9.500 1.500H15V7L13.800 5.800L11.500 8V13L6 16L1 13z" fill="#dedede" stroke="#b4b4b4" stroke-width=".9" stroke-linejoin="round"/><path d="M6 8.500v7M7.500 9.500l2.500-1M7.500 11.500l2.500-1" stroke="#b0b0b0" stroke-width=".8"/></svg>
<!-- reset icon -->
<svg style="left:151px;top:395px" width="16" height="16" viewBox="0 0 16 16"><circle cx="8" cy="8" r="7" fill="#b9b9b9" stroke="#a6a6a6" stroke-width=".8"/><circle cx="8" cy="8" r="4.200" fill="none" stroke="#ececec" stroke-width="1.500"/><path d="M5 11L11 5" stroke="#ececec" stroke-width="1.600"/></svg>
<!-- delete icon -->
<svg style="left:261px;top:396px" width="14" height="14" viewBox="0 0 14 14"><path d="M2.200 2.200l9.600 9.600M11.800 2.200l-9.600 9.600" stroke="#e8542c" stroke-width="4" stroke-linecap="round"/><path d="M2.800 2.800l8.400 8.400M11.200 2.800l-8.400 8.400" stroke="#f0744c" stroke-width="2" stroke-linecap="round"/></svg>
<!-- help icon -->
<span class="t" style="left:397px;top:393px;font-size:19px;line-height:20px;height:20px;font-weight:bold;color:#2f8fe0;letter-spacing:0;text-shadow:0 1px 0 #1a5fa8">?</span>
<!-- gear -->
<svg style="left:437px;top:426px" width="18" height="18" viewBox="0 0 18 18"><g transform="translate(9 9)"><g fill="#f4f4f4" stroke="#8c8c8c" stroke-width=".8"><rect x="-1.800" y="-8" width="3.600" height="16" rx="1"/><rect x="-1.800" y="-8" width="3.600" height="16" rx="1" transform="rotate(45)"/><rect x="-1.800" y="-8" width="3.600" height="16" rx="1" transform="rotate(90)"/><rect x="-1.800" y="-8" width="3.600" height="16" rx="1" transform="rotate(135)"/></g><circle r="5.300" fill="#f4f4f4" stroke="#8c8c8c" stroke-width=".8"/><circle r="5" fill="#f4f4f4"/><circle r="2" fill="#d4d4d4" stroke="#8c8c8c" stroke-width=".8"/></g></svg>
<!-- splitter dots -->
<div class="a" style="left:227px;top:359px;width:17px;height:1px;background-image:linear-gradient(90deg,#b4b4b4 1px,transparent 1px);background-size:3px 1px"></div>
<div class="a" style="left:470px;top:502px;width:1px;height:17px;background-image:linear-gradient(#b4b4b4 1px,transparent 1px);background-size:1px 3px"></div>
<!--/LEFTICONS-->
<!-- scroll area -->
<div class="a" style="left:0;top:452px;width:444px;height:393px;overflow:hidden">
 <div class="a" style="left:0;top:-452px;width:460px;height:900px">
  <div class="cb" style="left:10px;top:447px"></div><span class="t" style="left:29px;top:447px">Skip Zero Time</span>
  <div class="cb c" style="left:10px;top:474px"></div><span class="t" style="left:29px;top:474px;letter-spacing:.32px">Interpolate Volume Fields</span>
  <div class="cb" style="left:10px;top:501px"></div><span class="t" style="left:29px;top:501px">Extrapolate Patches</span>
  <div class="cb" style="left:10px;top:528px"></div><span class="t" style="left:29px;top:528px">Show Patch Names</span>
  <span class="t" style="left:10px;top:556px;font-weight:bold;letter-spacing:.55px">Selection</span>
  <div class="a" style="left:10px;top:572px;width:434px;height:1px;background:#8c8c8c"></div>
  <div class="cb" style="left:10px;top:583px"></div><span class="t" style="left:29px;top:583px">Include Sets</span>
  <div class="cb c" style="left:10px;top:610px"></div><span class="t" style="left:29px;top:610px">Include Zones</span>
  <div class="cb" style="left:10px;top:637px"></div><span class="t" style="left:29px;top:637px">Groups Only</span>
  <div class="a" style="left:10px;top:660px;width:435px;height:176px;background:#fff;border:1px solid #b4b4b4"></div>
  <div class="a" style="left:11px;top:661px;width:433px;height:21px;background:linear-gradient(#fafafa,#e6e6e6);border-bottom:1px solid #bdbdbd"></div>
  <div class="cb" style="left:14px;top:664px"><div class="a" style="left:2px;top:2px;width:8px;height:8px;background:#7a7a7a;border:1px solid #555"></div></div>
  <span class="t" style="left:33px;top:663px">Mesh Parts</span>
  <svg style="left:428px;top:664px" width="14" height="14" viewBox="0 0 14 14"><circle cx="7" cy="7" r="5.6" fill="#fff" stroke="#222" stroke-width="1.1"/><path d="M4.5 6h5L7 9z" fill="#222"/></svg>
  <div class="cb c" style="left:14px;top:684px"></div><span class="t" style="left:34px;top:682px">Air - wall</span>
  <div class="cb c" style="left:14px;top:701px"></div><span class="t" style="left:34px;top:699px">Concrete_sides - wall</span>
  <div class="cb c" style="left:14px;top:718px"></div><span class="t" style="left:34px;top:716px;letter-spacing:.28px">Gravel_bottom - wall</span>
  <div class="cb c" style="left:14px;top:735px"></div><span class="t" style="left:34px;top:733px;letter-spacing:.3px">Inlet - wall</span>
  <div class="cb c" style="left:14px;top:752px"></div><span class="t" style="left:34px;top:750px">Obstacle - wall</span>
  <div class="cb c" style="left:14px;top:769px"></div><span class="t" style="left:34px;top:767px;letter-spacing:.3px">Outlet - wall</span>
  <div class="cb c" style="left:14px;top:786px"></div><span class="t" style="left:34px;top:784px">internalMesh</span>
  <div class="cb" style="left:14px;top:803px"></div><span class="t" style="left:34px;top:801px;letter-spacing:.3px">wall - group</span>
  <div class="a" style="left:10px;top:840px;width:435px;height:30px;background:#fff;border:1px solid #b4b4b4"></div>
  <div class="a" style="left:11px;top:841px;width:433px;height:21px;background:linear-gradient(#fafafa,#e6e6e6)"></div>
  <div class="cb" style="left:14px;top:844px"></div>
 </div>
</div>
<!-- annotation rects -->
<div class="a" style="left:5px;top:576px;width:120px;height:31px;border:3px solid #22b04b"></div>
<div class="a" style="left:5px;top:656px;width:189px;height:169px;border:3px solid #f5822a"></div>
<!-- scrollbar -->
<div class="a" style="left:444px;top:452px;width:14px;height:393px;background:#e2e2e2;border-left:1px solid #c2c2c2"></div>
<div class="a" style="left:445px;top:452px;width:13px;height:14px;background:#fcfcfc;border-bottom:1px solid #c9c9c9"></div>
<div class="a" style="left:445px;top:490px;width:13px;height:61px;background:linear-gradient(90deg,#ffffff,#f1f1f1);border-top:1px solid #bdbdbd;border-bottom:1px solid #bdbdbd"></div>
<div class="a" style="left:445px;top:831px;width:13px;height:14px;background:#fcfcfc;border-top:1px solid #c9c9c9"></div>
<svg style="left:447px;top:456px" width="9" height="6" viewBox="0 0 9 6"><path d="M0 5.5L4.5 0.5L9 5.5z" fill="#4a4a4a"/></svg>
<svg style="left:447px;top:835px" width="9" height="6" viewBox="0 0 9 6"><path d="M0 0.5L4.5 5.5L9 0.5z" fill="#4a4a4a"/></svg>
</div>
<!-- RIGHT PANEL -->
<div id="right">
<div class="a" style="left:473px;top:191px;width:765px;height:662px;border-left:1px solid #c4c4c4;border-right:1px solid #c4c4c4;border-top:1px solid #c4c4c4"></div>
<div class="a" style="left:473px;top:165px;width:120px;height:27px;background:#f3f3f3;border:1px solid #c4c4c4;border-bottom:none;border-radius:3px 3px 0 0"></div>
<div class="a" style="left:485px;top:174px;width:10px;height:9px;border:1px solid #111;border-top-width:2px;background:#fff"></div>
<span class="t" style="left:499px;top:171px">Layout #1</span>
<div class="a" style="left:474px;top:192px;width:763px;height:22px;background:#fafafa"></div>
<span class="t" style="left:1024px;top:194px;font-weight:bold;letter-spacing:.85px;text-decoration:underline;text-underline-offset:2px">RenderView1</span>
<!--VIEWTB-->
<svg width="0" height="0" style="left:0;top:0"><defs>
<g id="scam"><path d="M.5 2.500h2l.7-1.300h3.600l.7 1.300h3v7H.5z" fill="#a9a995" stroke="#77776a" stroke-width=".9"/><circle cx="5.300" cy="5.800" r="2.400" fill="#d4d4c8" stroke="#77776a" stroke-width=".8"/></g>
<g id="dbox"><rect x=".6" y="2.600" width="9" height="8.500" fill="none" stroke="#55554a" stroke-width="1.100" stroke-dasharray="1.200 1.200"/></g>
<g id="marr"><path d="M1 1l5 2.300l-2 .6l1.700 2.400l-1.100.8l-1.700-2.400l-1.400 1.600z" fill="#6e6e60"/></g>
</defs></svg>
<svg style="left:478px;top:195px" width="15" height="15" viewBox="0 0 15 15"><use href="#scam" x="3.500" y=".5"/><path d="M1.200 10.500L2.300 5.800L4.200 7.200C7 4.800 10.800 7 9.500 10.500C8.700 12.600 6.500 13.300 4.500 13C6.500 12.200 7.300 10.600 6.300 9.600C5.600 9 4.800 9.200 4.300 9.800L5.600 11.200z" fill="#e8503a" stroke="#b8452e" stroke-width=".4"/></svg>
<svg style="left:498px;top:195px" width="15" height="15" viewBox="0 0 15 15" opacity=".55"><use href="#scam" x=".5" y=".5"/><use href="#scam" x="3" y="3.500"/><path d="M13.800 10.500L12.700 6.800L11 8C9 6.500 6 8 7 10.800C7.600 12.500 9.500 13.200 11 13C9.500 12.300 9 11 9.700 10.200C10.300 9.700 11 9.900 11.300 10.300L10.300 11.400z" fill="#b9b9b9" stroke="#9a9a9a" stroke-width=".4"/></svg>
<div class="a" style="left:518px;top:197px;width:1px;height:12px;background:#cfcfcf"></div>
<span class="t" style="left:527px;top:197px;font-size:10.500px;letter-spacing:0;color:#333;line-height:12px;height:12px">3D</span>
<svg style="left:546px;top:195px" width="14" height="14" viewBox="0 0 14 14"><use href="#scam" x=".3" y=".3"/><circle cx="9" cy="9.200" r="3.500" fill="#6fd24a"/><circle cx="8.700" cy="8.900" r="1.500" fill="none" stroke="#eaffdf" stroke-width=".9"/></svg>
<div class="a" style="left:565px;top:197px;width:1px;height:12px;background:#cfcfcf"></div>
<svg style="left:573px;top:195px" width="14" height="14" viewBox="0 0 14 14"><use href="#dbox"/><path d="M4.800 1.500v5M2.300 4h5" stroke="#1f8a1f" stroke-width="1.600"/><use href="#marr" x="5.500" y="6"/></svg>
<svg style="left:593px;top:195px" width="14" height="14" viewBox="0 0 14 14"><use href="#dbox"/><path d="M2.300 4.300h4.800" stroke="#e02020" stroke-width="1.700"/><use href="#marr" x="5.500" y="6"/></svg>
<svg style="left:613px;top:195px" width="14" height="14" viewBox="0 0 14 14"><use href="#dbox"/><path d="M4.800 1.200v4.400M2.600 3.400h4.400" stroke="#1f8a1f" stroke-width="1.500"/><path d="M2.300 7.800h4.800" stroke="#e02020" stroke-width="1.700"/><use href="#marr" x="5.500" y="6"/></svg>
<div class="a" style="left:631px;top:197px;width:1px;height:12px;background:#cfcfcf"></div>
<svg style="left:638px;top:195px" width="14" height="14" viewBox="0 0 14 14"><use href="#dbox"/><path d="M5 3L8.500 9.500H1.500z" fill="#9fd884" stroke="#7fbf60" stroke-width=".6"/><use href="#marr" x="5.500" y="6"/></svg>
<svg style="left:658px;top:195px" width="14" height="14" viewBox="0 0 14 14"><use href="#dbox"/><path d="M5 3L8.500 9.500H1.500z" fill="none" stroke="#bbb" stroke-width=".6"/><g fill="#e02020"><circle cx="5" cy="3" r=".9"/><circle cx="1.800" cy="9.300" r=".9"/><circle cx="8.300" cy="9.300" r=".9"/></g><use href="#marr" x="5.500" y="6"/></svg>
<svg style="left:678px;top:195px" width="14" height="14" viewBox="0 0 14 14"><path d="M1 3.500L6 1.500L11.500 3V9L6 11.500L1 9.500z" fill="#8fd070" stroke="#5f9a48" stroke-width=".8"/><path d="M1 3.500L6 5.500L11.500 3M6 5.500v6" stroke="#5f9a48" stroke-width=".6" fill="none"/><use href="#marr" x="5" y="7"/></svg>
<svg style="left:697px;top:195px" width="14" height="14" viewBox="0 0 14 14"><path d="M1 2.500L6 4V12L1 10zM6 4L12.500 2.500V10L6 12" fill="none" stroke="#77776a" stroke-width=".8"/><g fill="#e02020"><circle cx="3" cy="5" r=".9"/><circle cx="3" cy="8" r=".9"/><circle cx="8" cy="2" r=".9"/><circle cx="9" cy="6" r=".9"/><circle cx="12" cy="4" r=".9"/><circle cx="12" cy="8.500" r=".9"/><circle cx="5" cy="7" r=".9"/></g><use href="#marr" x="5.500" y="7.500"/></svg>
<svg style="left:717px;top:195px" width="14" height="14" viewBox="0 0 14 14"><path d="M1 1.500L5 4.500L11 1L9 6.500L12.500 11.500L5 9.500L1.500 12z" fill="none" stroke="#44603a" stroke-width=".9" stroke-dasharray="1.500 .8"/><circle cx="4.500" cy="7" r="1.800" fill="#7ccf58"/><path d="M4.500 7L11 3M4.500 7L11 11" stroke="#44603a" stroke-width=".9"/></svg>
<svg style="left:737px;top:195px" width="14" height="14" viewBox="0 0 14 14"><path d="M1 1.500L5 4.500L11 1L9 6.500L12.500 11.500L5 9.500L1.500 12z" fill="none" stroke="#44603a" stroke-width=".9" stroke-dasharray="1.500 .8"/><g fill="#e02020"><circle cx="4" cy="5" r=".9"/><circle cx="4" cy="8" r=".9"/><circle cx="6.500" cy="6.500" r=".9"/><circle cx="8" cy="9.500" r=".9"/><circle cx="8.500" cy="3.500" r=".9"/></g></svg>
<svg style="left:757px;top:195px" width="14" height="14" viewBox="0 0 14 14" opacity=".8"><rect x=".8" y="1.800" width="10.400" height="9.400" fill="#e4e4e4" stroke="#8a8a8a" stroke-width="1" stroke-dasharray="1.200 1.200"/><circle cx="6.800" cy="6.800" r="2.300" fill="#9fd884" stroke="#7a7a7a" stroke-width=".8"/><use href="#marr" x="7" y="7.500"/></svg>
<svg style="left:778px;top:195px" width="14" height="14" viewBox="0 0 14 14"><path d="M5.500 1.500L10 9.500H1z" fill="#8fd070" stroke="#6fb050" stroke-width=".6"/><use href="#marr" x="6.500" y="7"/></svg>
<svg style="left:798px;top:195px" width="14" height="14" viewBox="0 0 14 14"><path d="M5.500 1.500L10 9.500H1z" fill="none" stroke="#ccc" stroke-width=".6"/><g fill="#e02020"><circle cx="5.500" cy="1.700" r=".9"/><circle cx="1.300" cy="9.300" r=".9"/><circle cx="9.700" cy="9.300" r=".9"/></g><use href="#marr" x="6.500" y="7"/></svg>
<svg style="left:818px;top:195px" width="14" height="14" viewBox="0 0 14 14"><circle cx="1.800" cy="8.500" r="1" fill="#e02020"/></svg><span class="t" style="left:822px;top:195px;font-size:12.500px;font-weight:bold;letter-spacing:0;color:#55554a;line-height:13px;height:13px">?</span>
<svg style="left:838px;top:195px" width="14" height="14" viewBox="0 0 14 14"><path d="M3.500 6.500L6.500 12H.5z" fill="#8fd070" stroke="#6fb050" stroke-width=".6"/></svg><span class="t" style="left:843px;top:195px;font-size:12.500px;font-weight:bold;letter-spacing:0;color:#77776a;line-height:13px;height:13px">?</span>
<svg style="left:857px;top:195px" width="14" height="14" viewBox="0 0 14 14"><rect x="1" y="1.500" width="11" height="7" rx="1.500" fill="#c9c9c9" stroke="#a4a4a4" stroke-width=".8"/><path d="M1.500 5h10" stroke="#8a8a8a" stroke-width="1"/><path d="M2.500 9v3.500M4.500 9v3M6.500 9v3.500M8.500 9v3M10.500 9v3.500" stroke="#bdbdbd" stroke-width="1.200"/></svg>
<div class="btn" style="left:1132px;top:193px;width:20px;height:19px"></div>
<div class="btn" style="left:1153px;top:193px;width:20px;height:19px"></div>
<div class="btn" style="left:1174px;top:193px;width:20px;height:19px"></div>
<div class="btn" style="left:1195px;top:193px;width:20px;height:19px"></div>
<div class="btn" style="left:1216px;top:193px;width:20px;height:19px"></div>
<svg style="left:1136px;top:196px" width="12" height="12" viewBox="0 0 12 12"><rect x="1" y="1.500" width="9.500" height="8.500" fill="#e4ecff" stroke="#111" stroke-width="1.300"/><path d="M5.750 1.500v8.500" stroke="#111" stroke-width="1.300"/></svg>
<svg style="left:1157px;top:196px" width="12" height="12" viewBox="0 0 12 12"><rect x="1" y="1.500" width="9.500" height="8.500" fill="#e4ecff" stroke="#111" stroke-width="1.300"/><path d="M1 5.750h9.500" stroke="#111" stroke-width="1.300"/></svg>
<svg style="left:1178px;top:196px" width="12" height="12" viewBox="0 0 12 12"><rect x="1" y="2" width="9.500" height="8" fill="#fff" stroke="#111" stroke-width="1.300"/><path d="M1 2h9.500" stroke="#111" stroke-width="2.200"/></svg>
<svg style="left:1199px;top:196px" width="12" height="12" viewBox="0 0 12 12"><rect x=".5" y=".5" width="10.500" height="10.500" rx="2" fill="#f4f4f4" stroke="#8a8a8a" stroke-width="1"/><rect x="4.500" y="2.500" width="4.500" height="4.500" rx="1" fill="none" stroke="#8a8a8a" stroke-width="1"/><rect x="2.500" y="4.500" width="4.500" height="4.500" rx="1" fill="#f4f4f4" stroke="#8a8a8a" stroke-width="1"/></svg>
<svg style="left:1220px;top:196px" width="12" height="12" viewBox="0 0 12 12"><rect x=".5" y=".5" width="10.500" height="10.500" rx="2" fill="#f4f4f4" stroke="#8a8a8a" stroke-width="1"/><path d="M3 3l5.500 5.500M8.500 3L3 8.500" stroke="#7a7a7a" stroke-width="1.800"/></svg>
<!--/VIEWTB-->
<div class="a" style="left:475px;top:214px;width:761px;height:638px;background:#fff;border:2px solid #0000ff;box-shadow:0 0 0 0 #000"></div>
<!--MESH-->
<svg style="left:540px;top:476px" width="630" height="114" viewBox="0 0 630 114" shape-rendering="crispEdges">
<path d="M7.6 25L532.6 24.9L534 24.4L535.2 22.5L536.3 19.2L537.4 14.5L538.5 10.3L539.2 8.6L540 7.6L541.5 6.8L543.7 6.1L546.5 5.6L549.6 5.3L556 5.05L564 5L622.5 5.3C623.4 24 623.4 90 622.5 108.7L564 109L556 108.95L549.6 108.7L546.5 108.4L543.7 107.9L541.5 107.2L540 106.4L539.2 105.4L538.5 103.7L537.4 99.5L536.3 94.8L535.2 91.5L534 89.6L532.6 89.1L7.6 89C6.8 74 6.8 40 7.6 25z" fill="#000080" shape-rendering="geometricPrecision"/>
<defs><clipPath id="cBR"><rect x="17" y="39" width="543" height="2"/><rect x="17" y="44" width="543" height="2"/><rect x="17" y="47" width="543" height="2"/><rect x="17" y="52" width="543" height="2"/><rect x="17" y="57" width="543" height="2"/><rect x="17" y="60" width="543" height="2"/><rect x="17" y="65" width="543" height="2"/><rect x="17" y="68" width="543" height="2"/><rect x="17" y="73" width="543" height="2"/><rect x="556" y="18" width="55" height="2"/><rect x="556" y="21" width="55" height="2"/><rect x="556" y="26" width="55" height="2"/><rect x="556" y="31" width="55" height="2"/><rect x="556" y="34" width="55" height="2"/><rect x="556" y="39" width="55" height="2"/><rect x="556" y="44" width="55" height="2"/><rect x="556" y="47" width="55" height="2"/><rect x="556" y="52" width="55" height="2"/><rect x="556" y="57" width="55" height="2"/><rect x="556" y="60" width="55" height="2"/><rect x="556" y="65" width="55" height="2"/><rect x="556" y="68" width="55" height="2"/><rect x="556" y="73" width="55" height="2"/><rect x="556" y="78" width="55" height="2"/><rect x="556" y="83" width="55" height="2"/><rect x="556" y="86" width="55" height="2"/><rect x="556" y="91" width="55" height="2"/><rect x="556" y="96" width="55" height="2"/></clipPath><clipPath id="cDR"><rect x="17" y="37" width="543" height="1"/><rect x="17" y="42" width="543" height="1"/><rect x="17" y="50" width="543" height="1"/><rect x="17" y="55" width="543" height="1"/><rect x="17" y="63" width="543" height="1"/><rect x="17" y="71" width="543" height="1"/><rect x="17" y="76" width="543" height="1"/><rect x="556" y="24" width="55" height="1"/><rect x="556" y="29" width="55" height="1"/><rect x="556" y="37" width="55" height="1"/><rect x="556" y="42" width="55" height="1"/><rect x="556" y="50" width="55" height="1"/><rect x="556" y="55" width="55" height="1"/><rect x="556" y="63" width="55" height="1"/><rect x="556" y="71" width="55" height="1"/><rect x="556" y="76" width="55" height="1"/><rect x="556" y="81" width="55" height="1"/><rect x="556" y="89" width="55" height="1"/><rect x="556" y="94" width="55" height="1"/></clipPath></defs>
<g clip-path="url(#cBR)"><path d="M18 36h2v42h-2zM23 36h2v42h-2zM28 36h2v42h-2zM31 36h2v42h-2zM36 36h2v42h-2zM41 36h2v42h-2zM44 36h2v42h-2zM49 36h2v42h-2zM54 36h2v42h-2zM57 36h2v42h-2zM62 36h2v42h-2zM67 36h2v42h-2zM70 36h2v42h-2zM75 36h2v42h-2zM80 36h2v42h-2zM83 36h2v42h-2zM88 36h2v42h-2zM93 36h2v42h-2zM96 36h2v42h-2zM101 36h2v42h-2zM106 36h2v42h-2zM109 36h2v42h-2zM114 36h2v42h-2zM119 36h2v42h-2zM122 36h2v42h-2zM127 36h2v42h-2zM132 36h2v42h-2zM135 36h2v42h-2zM140 36h2v42h-2zM145 36h2v42h-2zM148 36h2v42h-2zM153 36h2v42h-2zM158 36h2v42h-2zM161 36h2v42h-2zM166 36h2v42h-2zM171 36h2v42h-2zM174 36h2v42h-2zM179 36h2v42h-2zM184 36h2v42h-2zM187 36h2v42h-2zM192 36h2v42h-2zM197 36h2v42h-2zM200 36h2v42h-2zM205 36h2v42h-2zM210 36h2v42h-2zM213 36h2v42h-2zM218 36h2v42h-2zM223 36h2v42h-2zM226 36h2v42h-2zM231 36h2v42h-2zM236 36h2v42h-2zM239 36h2v42h-2zM244 36h2v42h-2zM249 36h2v42h-2zM252 36h2v42h-2zM257 36h2v42h-2zM262 36h2v42h-2zM265 36h2v42h-2zM270 36h2v42h-2zM275 36h2v42h-2zM278 36h2v42h-2zM283 36h2v42h-2zM288 36h2v42h-2zM291 36h2v42h-2zM296 36h2v42h-2zM301 36h2v42h-2zM304 36h2v42h-2zM309 36h2v42h-2zM314 36h2v42h-2zM317 36h2v42h-2zM322 36h2v42h-2zM327 36h2v42h-2zM330 36h2v42h-2zM335 36h2v42h-2zM340 36h2v42h-2zM343 36h2v42h-2zM348 36h2v42h-2zM353 36h2v42h-2zM356 36h2v42h-2zM361 36h2v42h-2zM366 36h2v42h-2zM369 36h2v42h-2zM374 36h2v42h-2zM379 36h2v42h-2zM382 36h2v42h-2zM387 36h2v42h-2zM392 36h2v42h-2zM395 36h2v42h-2zM400 36h2v42h-2zM405 36h2v42h-2zM408 36h2v42h-2zM413 36h2v42h-2zM418 36h2v42h-2zM421 36h2v42h-2zM426 36h2v42h-2zM431 36h2v42h-2zM434 36h2v42h-2zM439 36h2v42h-2zM444 36h2v42h-2zM447 36h2v42h-2zM452 36h2v42h-2zM457 36h2v42h-2zM460 36h2v42h-2zM465 36h2v42h-2zM470 36h2v42h-2zM473 36h2v42h-2zM478 36h2v42h-2zM483 36h2v42h-2zM486 36h2v42h-2zM491 36h2v42h-2zM496 36h2v42h-2zM499 36h2v42h-2zM504 36h2v42h-2zM509 36h2v42h-2zM512 36h2v42h-2zM517 36h2v42h-2zM522 36h2v42h-2zM525 36h2v42h-2zM530 36h2v42h-2zM535 36h2v42h-2zM538 36h2v42h-2zM543 36h2v42h-2zM548 36h2v42h-2zM551 36h2v42h-2zM556 16h2v83h-2zM561 16h2v83h-2zM564 16h2v83h-2zM569 16h2v83h-2zM574 16h2v83h-2zM577 16h2v83h-2zM582 16h2v83h-2zM587 16h2v83h-2zM590 16h2v83h-2zM595 16h2v83h-2zM600 16h2v83h-2zM603 16h2v83h-2zM608 16h2v83h-2z" fill="#9090b5"/><path d="M21 36h1v42h-1zM26 36h1v42h-1zM34 36h1v42h-1zM39 36h1v42h-1zM47 36h1v42h-1zM52 36h1v42h-1zM60 36h1v42h-1zM65 36h1v42h-1zM73 36h1v42h-1zM78 36h1v42h-1zM86 36h1v42h-1zM91 36h1v42h-1zM99 36h1v42h-1zM104 36h1v42h-1zM112 36h1v42h-1zM117 36h1v42h-1zM125 36h1v42h-1zM130 36h1v42h-1zM138 36h1v42h-1zM143 36h1v42h-1zM151 36h1v42h-1zM156 36h1v42h-1zM164 36h1v42h-1zM169 36h1v42h-1zM177 36h1v42h-1zM182 36h1v42h-1zM190 36h1v42h-1zM195 36h1v42h-1zM203 36h1v42h-1zM208 36h1v42h-1zM216 36h1v42h-1zM221 36h1v42h-1zM229 36h1v42h-1zM234 36h1v42h-1zM242 36h1v42h-1zM247 36h1v42h-1zM255 36h1v42h-1zM260 36h1v42h-1zM268 36h1v42h-1zM273 36h1v42h-1zM281 36h1v42h-1zM286 36h1v42h-1zM294 36h1v42h-1zM299 36h1v42h-1zM307 36h1v42h-1zM312 36h1v42h-1zM320 36h1v42h-1zM325 36h1v42h-1zM333 36h1v42h-1zM338 36h1v42h-1zM346 36h1v42h-1zM351 36h1v42h-1zM359 36h1v42h-1zM364 36h1v42h-1zM372 36h1v42h-1zM377 36h1v42h-1zM385 36h1v42h-1zM390 36h1v42h-1zM398 36h1v42h-1zM403 36h1v42h-1zM411 36h1v42h-1zM416 36h1v42h-1zM424 36h1v42h-1zM429 36h1v42h-1zM437 36h1v42h-1zM442 36h1v42h-1zM450 36h1v42h-1zM455 36h1v42h-1zM463 36h1v42h-1zM468 36h1v42h-1zM476 36h1v42h-1zM481 36h1v42h-1zM489 36h1v42h-1zM494 36h1v42h-1zM502 36h1v42h-1zM507 36h1v42h-1zM515 36h1v42h-1zM520 36h1v42h-1zM528 36h1v42h-1zM533 36h1v42h-1zM541 36h1v42h-1zM546 36h1v42h-1zM559 16h1v83h-1zM567 16h1v83h-1zM572 16h1v83h-1zM580 16h1v83h-1zM585 16h1v83h-1zM593 16h1v83h-1zM598 16h1v83h-1zM606 16h1v83h-1zM611 16h1v83h-1z" fill="#56569f"/></g>
<g clip-path="url(#cDR)"><path d="M18 36h2v42h-2zM23 36h2v42h-2zM28 36h2v42h-2zM31 36h2v42h-2zM36 36h2v42h-2zM41 36h2v42h-2zM44 36h2v42h-2zM49 36h2v42h-2zM54 36h2v42h-2zM57 36h2v42h-2zM62 36h2v42h-2zM67 36h2v42h-2zM70 36h2v42h-2zM75 36h2v42h-2zM80 36h2v42h-2zM83 36h2v42h-2zM88 36h2v42h-2zM93 36h2v42h-2zM96 36h2v42h-2zM101 36h2v42h-2zM106 36h2v42h-2zM109 36h2v42h-2zM114 36h2v42h-2zM119 36h2v42h-2zM122 36h2v42h-2zM127 36h2v42h-2zM132 36h2v42h-2zM135 36h2v42h-2zM140 36h2v42h-2zM145 36h2v42h-2zM148 36h2v42h-2zM153 36h2v42h-2zM158 36h2v42h-2zM161 36h2v42h-2zM166 36h2v42h-2zM171 36h2v42h-2zM174 36h2v42h-2zM179 36h2v42h-2zM184 36h2v42h-2zM187 36h2v42h-2zM192 36h2v42h-2zM197 36h2v42h-2zM200 36h2v42h-2zM205 36h2v42h-2zM210 36h2v42h-2zM213 36h2v42h-2zM218 36h2v42h-2zM223 36h2v42h-2zM226 36h2v42h-2zM231 36h2v42h-2zM236 36h2v42h-2zM239 36h2v42h-2zM244 36h2v42h-2zM249 36h2v42h-2zM252 36h2v42h-2zM257 36h2v42h-2zM262 36h2v42h-2zM265 36h2v42h-2zM270 36h2v42h-2zM275 36h2v42h-2zM278 36h2v42h-2zM283 36h2v42h-2zM288 36h2v42h-2zM291 36h2v42h-2zM296 36h2v42h-2zM301 36h2v42h-2zM304 36h2v42h-2zM309 36h2v42h-2zM314 36h2v42h-2zM317 36h2v42h-2zM322 36h2v42h-2zM327 36h2v42h-2zM330 36h2v42h-2zM335 36h2v42h-2zM340 36h2v42h-2zM343 36h2v42h-2zM348 36h2v42h-2zM353 36h2v42h-2zM356 36h2v42h-2zM361 36h2v42h-2zM366 36h2v42h-2zM369 36h2v42h-2zM374 36h2v42h-2zM379 36h2v42h-2zM382 36h2v42h-2zM387 36h2v42h-2zM392 36h2v42h-2zM395 36h2v42h-2zM400 36h2v42h-2zM405 36h2v42h-2zM408 36h2v42h-2zM413 36h2v42h-2zM418 36h2v42h-2zM421 36h2v42h-2zM426 36h2v42h-2zM431 36h2v42h-2zM434 36h2v42h-2zM439 36h2v42h-2zM444 36h2v42h-2zM447 36h2v42h-2zM452 36h2v42h-2zM457 36h2v42h-2zM460 36h2v42h-2zM465 36h2v42h-2zM470 36h2v42h-2zM473 36h2v42h-2zM478 36h2v42h-2zM483 36h2v42h-2zM486 36h2v42h-2zM491 36h2v42h-2zM496 36h2v42h-2zM499 36h2v42h-2zM504 36h2v42h-2zM509 36h2v42h-2zM512 36h2v42h-2zM517 36h2v42h-2zM522 36h2v42h-2zM525 36h2v42h-2zM530 36h2v42h-2zM535 36h2v42h-2zM538 36h2v42h-2zM543 36h2v42h-2zM548 36h2v42h-2zM551 36h2v42h-2zM556 16h2v83h-2zM561 16h2v83h-2zM564 16h2v83h-2zM569 16h2v83h-2zM574 16h2v83h-2zM577 16h2v83h-2zM582 16h2v83h-2zM587 16h2v83h-2zM590 16h2v83h-2zM595 16h2v83h-2zM600 16h2v83h-2zM603 16h2v83h-2zM608 16h2v83h-2z" fill="#5858a1"/><path d="M21 36h1v42h-1zM26 36h1v42h-1zM34 36h1v42h-1zM39 36h1v42h-1zM47 36h1v42h-1zM52 36h1v42h-1zM60 36h1v42h-1zM65 36h1v42h-1zM73 36h1v42h-1zM78 36h1v42h-1zM86 36h1v42h-1zM91 36h1v42h-1zM99 36h1v42h-1zM104 36h1v42h-1zM112 36h1v42h-1zM117 36h1v42h-1zM125 36h1v42h-1zM130 36h1v42h-1zM138 36h1v42h-1zM143 36h1v42h-1zM151 36h1v42h-1zM156 36h1v42h-1zM164 36h1v42h-1zM169 36h1v42h-1zM177 36h1v42h-1zM182 36h1v42h-1zM190 36h1v42h-1zM195 36h1v42h-1zM203 36h1v42h-1zM208 36h1v42h-1zM216 36h1v42h-1zM221 36h1v42h-1zM229 36h1v42h-1zM234 36h1v42h-1zM242 36h1v42h-1zM247 36h1v42h-1zM255 36h1v42h-1zM260 36h1v42h-1zM268 36h1v42h-1zM273 36h1v42h-1zM281 36h1v42h-1zM286 36h1v42h-1zM294 36h1v42h-1zM299 36h1v42h-1zM307 36h1v42h-1zM312 36h1v42h-1zM320 36h1v42h-1zM325 36h1v42h-1zM333 36h1v42h-1zM338 36h1v42h-1zM346 36h1v42h-1zM351 36h1v42h-1zM359 36h1v42h-1zM364 36h1v42h-1zM372 36h1v42h-1zM377 36h1v42h-1zM385 36h1v42h-1zM390 36h1v42h-1zM398 36h1v42h-1zM403 36h1v42h-1zM411 36h1v42h-1zM416 36h1v42h-1zM424 36h1v42h-1zM429 36h1v42h-1zM437 36h1v42h-1zM442 36h1v42h-1zM450 36h1v42h-1zM455 36h1v42h-1zM463 36h1v42h-1zM468 36h1v42h-1zM476 36h1v42h-1zM481 36h1v42h-1zM489 36h1v42h-1zM494 36h1v42h-1zM502 36h1v42h-1zM507 36h1v42h-1zM515 36h1v42h-1zM520 36h1v42h-1zM528 36h1v42h-1zM533 36h1v42h-1zM541 36h1v42h-1zM546 36h1v42h-1zM559 16h1v83h-1zM567 16h1v83h-1zM572 16h1v83h-1zM580 16h1v83h-1zM585 16h1v83h-1zM593 16h1v83h-1zM598 16h1v83h-1zM606 16h1v83h-1zM611 16h1v83h-1z" fill="#2e2e90"/></g>
<path d="M10 26h1v1h-1zM10 31h1v1h-1zM10 82h1v1h-1zM10 87h1v1h-1zM11 35h1v1h-1zM11 39h1v1h-1zM11 44h1v1h-1zM11 48h1v1h-1zM11 52h1v1h-1zM11 57h1v1h-1zM11 61h1v1h-1zM11 65h1v1h-1zM11 69h1v1h-1zM11 73h1v1h-1zM11 78h1v1h-1zM15 26h1v1h-1zM15 31h1v1h-1zM15 35h1v1h-1zM15 39h1v1h-1zM15 44h1v1h-1zM15 48h1v1h-1zM15 52h1v1h-1zM15 57h1v1h-1zM15 61h1v1h-1zM15 65h1v1h-1zM15 69h1v1h-1zM15 73h1v1h-1zM15 78h1v1h-1zM15 82h1v1h-1zM15 87h1v1h-1zM18 26h1v1h-1zM18 31h1v1h-1zM18 82h1v1h-1zM18 87h1v1h-1zM19 35h1v1h-1zM19 78h1v1h-1zM23 26h1v1h-1zM23 31h1v1h-1zM23 82h1v1h-1zM23 87h1v1h-1zM24 35h1v1h-1zM24 78h1v1h-1zM28 26h1v1h-1zM28 31h1v1h-1zM28 82h1v1h-1zM28 87h1v1h-1zM29 35h1v1h-1zM29 78h1v1h-1zM31 26h1v1h-1zM31 31h1v1h-1zM31 82h1v1h-1zM31 87h1v1h-1zM32 35h1v1h-1zM32 78h1v1h-1zM36 26h1v1h-1zM36 31h1v1h-1zM36 82h1v1h-1zM36 87h1v1h-1zM37 35h1v1h-1zM37 78h1v1h-1zM41 26h1v1h-1zM41 31h1v1h-1zM41 82h1v1h-1zM41 87h1v1h-1zM42 35h1v1h-1zM42 78h1v1h-1zM44 26h1v1h-1zM44 31h1v1h-1zM44 82h1v1h-1zM44 87h1v1h-1zM45 35h1v1h-1zM45 78h1v1h-1zM49 26h1v1h-1zM49 31h1v1h-1zM49 82h1v1h-1zM49 87h1v1h-1zM50 35h1v1h-1zM50 78h1v1h-1zM54 26h1v1h-1zM54 31h1v1h-1zM54 82h1v1h-1zM54 87h1v1h-1zM55 35h1v1h-1zM55 78h1v1h-1zM57 26h1v1h-1zM57 31h1v1h-1zM57 82h1v1h-1zM57 87h1v1h-1zM58 35h1v1h-1zM58 78h1v1h-1zM62 26h1v1h-1zM62 31h1v1h-1zM62 82h1v1h-1zM62 87h1v1h-1zM63 35h1v1h-1zM63 78h1v1h-1zM67 26h1v1h-1zM67 31h1v1h-1zM67 82h1v1h-1zM67 87h1v1h-1zM68 35h1v1h-1zM68 78h1v1h-1zM70 26h1v1h-1zM70 31h1v1h-1zM70 82h1v1h-1zM70 87h1v1h-1zM71 35h1v1h-1zM71 78h1v1h-1zM75 26h1v1h-1zM75 31h1v1h-1zM75 82h1v1h-1zM75 87h1v1h-1zM76 35h1v1h-1zM76 78h1v1h-1zM80 26h1v1h-1zM80 31h1v1h-1zM80 82h1v1h-1zM80 87h1v1h-1zM81 35h1v1h-1zM81 78h1v1h-1zM83 26h1v1h-1zM83 31h1v1h-1zM83 82h1v1h-1zM83 87h1v1h-1zM84 35h1v1h-1zM84 78h1v1h-1zM88 26h1v1h-1zM88 31h1v1h-1zM88 82h1v1h-1zM88 87h1v1h-1zM89 35h1v1h-1zM89 78h1v1h-1zM93 26h1v1h-1zM93 31h1v1h-1zM93 82h1v1h-1zM93 87h1v1h-1zM94 35h1v1h-1zM94 78h1v1h-1zM96 26h1v1h-1zM96 31h1v1h-1zM96 82h1v1h-1zM96 87h1v1h-1zM97 35h1v1h-1zM97 78h1v1h-1zM101 26h1v1h-1zM101 31h1v1h-1zM101 82h1v1h-1zM101 87h1v1h-1zM102 35h1v1h-1zM102 78h1v1h-1zM106 26h1v1h-1zM106 31h1v1h-1zM106 82h1v1h-1zM106 87h1v1h-1zM107 35h1v1h-1zM107 78h1v1h-1zM109 26h1v1h-1zM109 31h1v1h-1zM109 82h1v1h-1zM109 87h1v1h-1zM110 35h1v1h-1zM110 78h1v1h-1zM114 26h1v1h-1zM114 31h1v1h-1zM114 82h1v1h-1zM114 87h1v1h-1zM115 35h1v1h-1zM115 78h1v1h-1zM119 26h1v1h-1zM119 31h1v1h-1zM119 82h1v1h-1zM119 87h1v1h-1zM120 35h1v1h-1zM120 78h1v1h-1zM122 26h1v1h-1zM122 31h1v1h-1zM122 82h1v1h-1zM122 87h1v1h-1zM123 35h1v1h-1zM123 78h1v1h-1zM127 26h1v1h-1zM127 31h1v1h-1zM127 82h1v1h-1zM127 87h1v1h-1zM128 35h1v1h-1zM128 78h1v1h-1zM132 26h1v1h-1zM132 31h1v1h-1zM132 82h1v1h-1zM132 87h1v1h-1zM133 35h1v1h-1zM133 78h1v1h-1zM135 26h1v1h-1zM135 31h1v1h-1zM135 82h1v1h-1zM135 87h1v1h-1zM136 35h1v1h-1zM136 78h1v1h-1zM140 26h1v1h-1zM140 31h1v1h-1zM140 82h1v1h-1zM140 87h1v1h-1zM141 35h1v1h-1zM141 78h1v1h-1zM145 26h1v1h-1zM145 31h1v1h-1zM145 82h1v1h-1zM145 87h1v1h-1zM146 35h1v1h-1zM146 78h1v1h-1zM148 26h1v1h-1zM148 31h1v1h-1zM148 82h1v1h-1zM148 87h1v1h-1zM149 35h1v1h-1zM149 78h1v1h-1zM153 26h1v1h-1zM153 31h1v1h-1zM153 82h1v1h-1zM153 87h1v1h-1zM154 35h1v1h-1zM154 78h1v1h-1zM158 26h1v1h-1zM158 31h1v1h-1zM158 82h1v1h-1zM158 87h1v1h-1zM159 35h1v1h-1zM159 78h1v1h-1zM161 26h1v1h-1zM161 31h1v1h-1zM161 82h1v1h-1zM161 87h1v1h-1zM162 35h1v1h-1zM162 78h1v1h-1zM166 26h1v1h-1zM166 31h1v1h-1zM166 82h1v1h-1zM166 87h1v1h-1zM167 35h1v1h-1zM167 78h1v1h-1zM171 26h1v1h-1zM171 31h1v1h-1zM171 82h1v1h-1zM171 87h1v1h-1zM172 35h1v1h-1zM172 78h1v1h-1zM174 26h1v1h-1zM174 31h1v1h-1zM174 82h1v1h-1zM174 87h1v1h-1zM175 35h1v1h-1zM175 78h1v1h-1zM179 26h1v1h-1zM179 31h1v1h-1zM179 82h1v1h-1zM179 87h1v1h-1zM180 35h1v1h-1zM180 78h1v1h-1zM184 26h1v1h-1zM184 31h1v1h-1zM184 82h1v1h-1zM184 87h1v1h-1zM185 35h1v1h-1zM185 78h1v1h-1zM187 26h1v1h-1zM187 31h1v1h-1zM187 82h1v1h-1zM187 87h1v1h-1zM188 35h1v1h-1zM188 78h1v1h-1zM192 26h1v1h-1zM192 31h1v1h-1zM192 82h1v1h-1zM192 87h1v1h-1zM193 35h1v1h-1zM193 78h1v1h-1zM197 26h1v1h-1zM197 31h1v1h-1zM197 82h1v1h-1zM197 87h1v1h-1zM198 35h1v1h-1zM198 78h1v1h-1zM200 26h1v1h-1zM200 31h1v1h-1zM200 82h1v1h-1zM200 87h1v1h-1zM201 35h1v1h-1zM201 78h1v1h-1zM205 26h1v1h-1zM205 31h1v1h-1zM205 82h1v1h-1zM205 87h1v1h-1zM206 35h1v1h-1zM206 78h1v1h-1zM210 26h1v1h-1zM210 31h1v1h-1zM210 82h1v1h-1zM210 87h1v1h-1zM211 35h1v1h-1zM211 78h1v1h-1zM213 26h1v1h-1zM213 31h1v1h-1zM213 82h1v1h-1zM213 87h1v1h-1zM214 35h1v1h-1zM214 78h1v1h-1zM218 26h1v1h-1zM218 31h1v1h-1zM218 82h1v1h-1zM218 87h1v1h-1zM219 35h1v1h-1zM219 78h1v1h-1zM223 26h1v1h-1zM223 31h1v1h-1zM223 82h1v1h-1zM223 87h1v1h-1zM224 35h1v1h-1zM224 78h1v1h-1zM226 26h1v1h-1zM226 31h1v1h-1zM226 82h1v1h-1zM226 87h1v1h-1zM227 35h1v1h-1zM227 78h1v1h-1zM231 26h1v1h-1zM231 31h1v1h-1zM231 82h1v1h-1zM231 87h1v1h-1zM232 35h1v1h-1zM232 78h1v1h-1zM236 26h1v1h-1zM236 31h1v1h-1zM236 82h1v1h-1zM236 87h1v1h-1zM237 35h1v1h-1zM237 78h1v1h-1zM239 26h1v1h-1zM239 31h1v1h-1zM239 82h1v1h-1zM239 87h1v1h-1zM240 35h1v1h-1zM240 78h1v1h-1zM244 26h1v1h-1zM244 31h1v1h-1zM244 82h1v1h-1zM244 87h1v1h-1zM245 35h1v1h-1zM245 78h1v1h-1zM249 26h1v1h-1zM249 31h1v1h-1zM249 82h1v1h-1zM249 87h1v1h-1zM250 35h1v1h-1zM250 78h1v1h-1zM252 26h1v1h-1zM252 31h1v1h-1zM252 82h1v1h-1zM252 87h1v1h-1zM253 35h1v1h-1zM253 78h1v1h-1zM257 26h1v1h-1zM257 31h1v1h-1zM257 82h1v1h-1zM257 87h1v1h-1zM258 35h1v1h-1zM258 78h1v1h-1zM262 26h1v1h-1zM262 31h1v1h-1zM262 82h1v1h-1zM262 87h1v1h-1zM263 35h1v1h-1zM263 78h1v1h-1zM265 26h1v1h-1zM265 31h1v1h-1zM265 82h1v1h-1zM265 87h1v1h-1zM266 35h1v1h-1zM266 78h1v1h-1zM270 26h1v1h-1zM270 31h1v1h-1zM270 82h1v1h-1zM270 87h1v1h-1zM271 35h1v1h-1zM271 78h1v1h-1zM275 26h1v1h-1zM275 31h1v1h-1zM275 82h1v1h-1zM275 87h1v1h-1zM276 35h1v1h-1zM276 78h1v1h-1zM278 26h1v1h-1zM278 31h1v1h-1zM278 82h1v1h-1zM278 87h1v1h-1zM279 35h1v1h-1zM279 78h1v1h-1zM283 26h1v1h-1zM283 31h1v1h-1zM283 82h1v1h-1zM283 87h1v1h-1zM284 35h1v1h-1zM284 78h1v1h-1zM288 26h1v1h-1zM288 31h1v1h-1zM288 82h1v1h-1zM288 87h1v1h-1zM289 35h1v1h-1zM289 78h1v1h-1zM291 26h1v1h-1zM291 31h1v1h-1zM291 82h1v1h-1zM291 87h1v1h-1zM292 35h1v1h-1zM292 78h1v1h-1zM296 26h1v1h-1zM296 31h1v1h-1zM296 82h1v1h-1zM296 87h1v1h-1zM297 35h1v1h-1zM297 78h1v1h-1zM301 26h1v1h-1zM301 31h1v1h-1zM301 82h1v1h-1zM301 87h1v1h-1zM302 35h1v1h-1zM302 78h1v1h-1zM304 26h1v1h-1zM304 31h1v1h-1zM304 82h1v1h-1zM304 87h1v1h-1zM305 35h1v1h-1zM305 78h1v1h-1zM309 26h1v1h-1zM309 31h1v1h-1zM309 82h1v1h-1zM309 87h1v1h-1zM310 35h1v1h-1zM310 78h1v1h-1zM314 26h1v1h-1zM314 31h1v1h-1zM314 82h1v1h-1zM314 87h1v1h-1zM315 35h1v1h-1zM315 78h1v1h-1zM317 26h1v1h-1zM317 31h1v1h-1zM317 82h1v1h-1zM317 87h1v1h-1zM318 35h1v1h-1zM318 78h1v1h-1zM322 26h1v1h-1zM322 31h1v1h-1zM322 82h1v1h-1zM322 87h1v1h-1zM323 35h1v1h-1zM323 78h1v1h-1zM327 26h1v1h-1zM327 31h1v1h-1zM327 82h1v1h-1zM327 87h1v1h-1zM328 35h1v1h-1zM328 78h1v1h-1zM330 26h1v1h-1zM330 31h1v1h-1zM330 82h1v1h-1zM330 87h1v1h-1zM331 35h1v1h-1zM331 78h1v1h-1zM335 26h1v1h-1zM335 31h1v1h-1zM335 82h1v1h-1zM335 87h1v1h-1zM336 35h1v1h-1zM336 78h1v1h-1zM340 26h1v1h-1zM340 31h1v1h-1zM340 82h1v1h-1zM340 87h1v1h-1zM341 35h1v1h-1zM341 78h1v1h-1zM343 26h1v1h-1zM343 31h1v1h-1zM343 82h1v1h-1zM343 87h1v1h-1zM344 35h1v1h-1zM344 78h1v1h-1zM348 26h1v1h-1zM348 31h1v1h-1zM348 82h1v1h-1zM348 87h1v1h-1zM349 35h1v1h-1zM349 78h1v1h-1zM353 26h1v1h-1zM353 31h1v1h-1zM353 82h1v1h-1zM353 87h1v1h-1zM354 35h1v1h-1zM354 78h1v1h-1zM356 26h1v1h-1zM356 31h1v1h-1zM356 82h1v1h-1zM356 87h1v1h-1zM357 35h1v1h-1zM357 78h1v1h-1zM361 26h1v1h-1zM361 31h1v1h-1zM361 82h1v1h-1zM361 87h1v1h-1zM362 35h1v1h-1zM362 78h1v1h-1zM366 26h1v1h-1zM366 31h1v1h-1zM366 82h1v1h-1zM366 87h1v1h-1zM367 35h1v1h-1zM367 78h1v1h-1zM369 26h1v1h-1zM369 31h1v1h-1zM369 82h1v1h-1zM369 87h1v1h-1zM370 35h1v1h-1zM370 78h1v1h-1zM374 26h1v1h-1zM374 31h1v1h-1zM374 82h1v1h-1zM374 87h1v1h-1zM375 35h1v1h-1zM375 78h1v1h-1zM379 26h1v1h-1zM379 31h1v1h-1zM379 82h1v1h-1zM379 87h1v1h-1zM380 35h1v1h-1zM380 78h1v1h-1zM382 26h1v1h-1zM382 31h1v1h-1zM382 82h1v1h-1zM382 87h1v1h-1zM383 35h1v1h-1zM383 78h1v1h-1zM387 26h1v1h-1zM387 31h1v1h-1zM387 82h1v1h-1zM387 87h1v1h-1zM388 35h1v1h-1zM388 78h1v1h-1zM392 26h1v1h-1zM392 31h1v1h-1zM392 82h1v1h-1zM392 87h1v1h-1zM393 35h1v1h-1zM393 78h1v1h-1zM395 26h1v1h-1zM395 31h1v1h-1zM395 82h1v1h-1zM395 87h1v1h-1zM396 35h1v1h-1zM396 78h1v1h-1zM400 26h1v1h-1zM400 31h1v1h-1zM400 82h1v1h-1zM400 87h1v1h-1zM401 35h1v1h-1zM401 78h1v1h-1zM405 26h1v1h-1zM405 31h1v1h-1zM405 82h1v1h-1zM405 87h1v1h-1zM406 35h1v1h-1zM406 78h1v1h-1zM408 26h1v1h-1zM408 31h1v1h-1zM408 82h1v1h-1zM408 87h1v1h-1zM409 35h1v1h-1zM409 78h1v1h-1zM413 26h1v1h-1zM413 31h1v1h-1zM413 82h1v1h-1zM413 87h1v1h-1zM414 35h1v1h-1zM414 78h1v1h-1zM418 26h1v1h-1zM418 31h1v1h-1zM418 82h1v1h-1zM418 87h1v1h-1zM419 35h1v1h-1zM419 78h1v1h-1zM421 26h1v1h-1zM421 31h1v1h-1zM421 82h1v1h-1zM421 87h1v1h-1zM422 35h1v1h-1zM422 78h1v1h-1zM426 26h1v1h-1zM426 31h1v1h-1zM426 82h1v1h-1zM426 87h1v1h-1zM427 35h1v1h-1zM427 78h1v1h-1zM431 26h1v1h-1zM431 31h1v1h-1zM431 82h1v1h-1zM431 87h1v1h-1zM432 35h1v1h-1zM432 78h1v1h-1zM434 26h1v1h-1zM434 31h1v1h-1zM434 82h1v1h-1zM434 87h1v1h-1zM435 35h1v1h-1zM435 78h1v1h-1zM439 26h1v1h-1zM439 31h1v1h-1zM439 82h1v1h-1zM439 87h1v1h-1zM440 35h1v1h-1zM440 78h1v1h-1zM444 26h1v1h-1zM444 31h1v1h-1zM444 82h1v1h-1zM444 87h1v1h-1zM445 35h1v1h-1zM445 78h1v1h-1zM447 26h1v1h-1zM447 31h1v1h-1zM447 82h1v1h-1zM447 87h1v1h-1zM448 35h1v1h-1zM448 78h1v1h-1zM452 26h1v1h-1zM452 31h1v1h-1zM452 82h1v1h-1zM452 87h1v1h-1zM453 35h1v1h-1zM453 78h1v1h-1zM457 26h1v1h-1zM457 31h1v1h-1zM457 82h1v1h-1zM457 87h1v1h-1zM458 35h1v1h-1zM458 78h1v1h-1zM460 26h1v1h-1zM460 31h1v1h-1zM460 82h1v1h-1zM460 87h1v1h-1zM461 35h1v1h-1zM461 78h1v1h-1zM465 26h1v1h-1zM465 31h1v1h-1zM465 82h1v1h-1zM465 87h1v1h-1zM466 35h1v1h-1zM466 78h1v1h-1zM470 26h1v1h-1zM470 31h1v1h-1zM470 82h1v1h-1zM470 87h1v1h-1zM471 35h1v1h-1zM471 78h1v1h-1zM473 26h1v1h-1zM473 31h1v1h-1zM473 82h1v1h-1zM473 87h1v1h-1zM474 35h1v1h-1zM474 78h1v1h-1zM478 26h1v1h-1zM478 31h1v1h-1zM478 82h1v1h-1zM478 87h1v1h-1zM479 35h1v1h-1zM479 78h1v1h-1zM483 26h1v1h-1zM483 31h1v1h-1zM483 82h1v1h-1zM483 87h1v1h-1zM484 35h1v1h-1zM484 78h1v1h-1zM486 26h1v1h-1zM486 31h1v1h-1zM486 82h1v1h-1zM486 87h1v1h-1zM487 35h1v1h-1zM487 78h1v1h-1zM491 26h1v1h-1zM491 31h1v1h-1zM491 82h1v1h-1zM491 87h1v1h-1zM492 35h1v1h-1zM492 78h1v1h-1zM496 26h1v1h-1zM496 31h1v1h-1zM496 82h1v1h-1zM496 87h1v1h-1zM497 35h1v1h-1zM497 78h1v1h-1zM499 26h1v1h-1zM499 31h1v1h-1zM499 82h1v1h-1zM499 87h1v1h-1zM500 35h1v1h-1zM500 78h1v1h-1zM504 26h1v1h-1zM504 31h1v1h-1zM504 82h1v1h-1zM504 87h1v1h-1zM505 35h1v1h-1zM505 78h1v1h-1zM509 26h1v1h-1zM509 31h1v1h-1zM509 82h1v1h-1zM509 87h1v1h-1zM510 35h1v1h-1zM510 78h1v1h-1zM512 26h1v1h-1zM512 31h1v1h-1zM512 82h1v1h-1zM512 87h1v1h-1zM513 35h1v1h-1zM513 78h1v1h-1zM517 26h1v1h-1zM517 31h1v1h-1zM517 82h1v1h-1zM517 87h1v1h-1zM518 35h1v1h-1zM518 78h1v1h-1zM522 26h1v1h-1zM522 31h1v1h-1zM522 82h1v1h-1zM522 87h1v1h-1zM523 35h1v1h-1zM523 78h1v1h-1zM525 26h1v1h-1zM525 31h1v1h-1zM525 82h1v1h-1zM525 87h1v1h-1zM526 35h1v1h-1zM526 78h1v1h-1zM530 26h1v1h-1zM530 31h1v1h-1zM530 82h1v1h-1zM530 87h1v1h-1zM531 35h1v1h-1zM531 78h1v1h-1zM535 26h1v1h-1zM535 31h1v1h-1zM535 82h1v1h-1zM535 87h1v1h-1zM536 35h1v1h-1zM536 78h1v1h-1zM539 35h1v1h-1zM539 78h1v1h-1zM544 35h1v1h-1zM544 78h1v1h-1zM549 35h1v1h-1zM549 78h1v1h-1zM551 13h1v1h-1zM551 17h1v1h-1zM551 21h1v1h-1zM551 93h1v1h-1zM551 97h1v1h-1zM551 100h1v1h-1zM551 101h1v1h-1zM552 35h1v1h-1zM552 78h1v1h-1zM555 13h1v1h-1zM555 17h1v1h-1zM555 21h1v1h-1zM555 93h1v1h-1zM555 97h1v1h-1zM555 101h1v1h-1zM556 13h1v1h-1zM556 100h1v1h-1zM561 8h1v1h-1zM561 13h1v1h-1zM561 100h1v1h-1zM561 104h1v1h-1zM564 8h1v1h-1zM564 13h1v1h-1zM564 100h1v1h-1zM564 104h1v1h-1zM569 8h1v1h-1zM569 104h1v1h-1zM574 8h1v1h-1zM574 104h1v1h-1zM577 8h1v1h-1zM577 104h1v1h-1zM582 8h1v1h-1zM582 13h1v1h-1zM582 100h1v1h-1zM582 104h1v1h-1zM587 8h1v1h-1zM587 104h1v1h-1zM590 8h1v1h-1zM590 104h1v1h-1zM595 8h1v1h-1zM595 104h1v1h-1zM600 8h1v1h-1zM600 13h1v1h-1zM600 100h1v1h-1zM600 104h1v1h-1zM603 8h1v1h-1zM603 13h1v1h-1zM603 100h1v1h-1zM603 104h1v1h-1zM608 8h1v1h-1zM608 104h1v1h-1zM613 8h1v1h-1zM613 104h1v1h-1zM615 13h1v1h-1zM615 17h1v1h-1zM615 21h1v1h-1zM615 25h1v1h-1zM615 29h1v1h-1zM615 33h1v1h-1zM615 37h1v1h-1zM615 41h1v1h-1zM615 45h1v1h-1zM615 49h1v1h-1zM615 53h1v1h-1zM615 57h1v1h-1zM615 61h1v1h-1zM615 65h1v1h-1zM615 69h1v1h-1zM615 73h1v1h-1zM615 77h1v1h-1zM615 81h1v1h-1zM615 85h1v1h-1zM615 89h1v1h-1zM615 93h1v1h-1zM615 97h1v1h-1zM615 101h1v1h-1zM616 8h1v1h-1zM616 104h1v1h-1z" fill="#444498"/>
</svg>
<!--/MESH-->
<!--AXES-->
<svg style="left:545px;top:720px" width="64" height="60" viewBox="0 0 64 60">
<path d="M11.500 49V13" stroke="#ffff00" stroke-width="1.300"/>
<path d="M8.300 14L11.500 6.500L14.800 14z" fill="#e6e600" stroke="#b8b800" stroke-width=".6"/>
<path d="M14 49.500h35" stroke="#ff1010" stroke-width="1.200"/>
<path d="M47.500 46.300L56.500 49.500L47.500 52.800z" fill="#ee0000" stroke="#c00" stroke-width=".5"/>
<path d="M13 49.500h9" stroke="#000" stroke-width="2.200"/>
<circle cx="12" cy="49.700" r="4.300" fill="#006400"/>
<g fill="none" stroke="#111" stroke-width="1.100"><path d="M14.500 6.500L18 11L22 6.500M18 11v5"/><path d="M14.500 40.500h7.500L14 50h8" /><path d="M49.500 41.500L57 51M57 41.500L49.500 51"/></g>
</svg>
<!--/AXES-->
</div>
<!-- POPUPS -->
<div id="popups">
<div class="a" style="left:238px;top:93px;width:177px;height:77px;background:#efefef;border:1px solid #9a9a9a"></div>
<div class="a sel" style="left:239px;top:94px;width:175px;height:25px"></div>
<span class="t" style="left:274px;top:98px;color:#fff">Solid Color</span>
<span class="t" style="left:274px;top:123px;letter-spacing:.35px">vtkCompositeIndex</span>
<span class="t" style="left:274px;top:148px">vtkBlockColors</span>
<!--POP1ICONS-->
<svg style="left:249px;top:99px" width="15" height="15" viewBox="0 0 15 15"><circle cx="7.500" cy="7.500" r="6" fill="#c9813f" stroke="#111" stroke-width="1.100"/></svg>
<svg style="left:249px;top:123px" width="16" height="17" viewBox="0 0 16 17"><defs><linearGradient id="gOr" x1="0" y1="0" x2="1" y2="1"><stop offset="0" stop-color="#ffb05c"/><stop offset=".5" stop-color="#f57a10"/><stop offset="1" stop-color="#e25f00"/></linearGradient></defs><path d="M.8 3.500L7.500 .8L15 3.200V11.500L8 16L.8 12z" fill="url(#gOr)" stroke="#c9650e" stroke-width=".8"/><path d="M.8 3.500L8 5.800L15 3.200M8 5.800V16" fill="none" stroke="#ffc58a" stroke-width=".8"/><path d="M2 5.200L6.500 6.800V10L2 8.500z" fill="#ffd0a0" opacity=".6"/></svg>
<svg style="left:249px;top:149px" width="16" height="16" viewBox="0 0 16 16"><circle cx="7.800" cy="7.800" r="7" fill="#fcc419" stroke="#8a8a5a" stroke-width="1"/><path d="M3.200 3.200L12.400 12.400M12.400 3.200L3.200 12.400" stroke="#6b6b55" stroke-width="1.300"/><rect x="4.800" y="4.800" width="6" height="6" fill="#a39b72" stroke="#6b6b55" stroke-width=".9"/></svg>
<!--/POP1ICONS-->
<div class="a" style="left:524px;top:-3px;width:156px;height:201px;background:#efefef;border:1px solid #9a9a9a;border-left-color:#d9d9d9"></div>
<div class="a sel" style="left:525px;top:147px;width:154px;height:25px"></div>
<span class="t" style="left:531px;top:1px">3D Glyphs</span>
<span class="t" style="left:531px;top:26px">Feature Edges</span>
<span class="t" style="left:531px;top:51px">Outline</span>
<span class="t" style="left:531px;top:76px">Point Gaussian</span>
<span class="t" style="left:531px;top:101px">Points</span>
<span class="t" style="left:531px;top:126px">Surface</span>
<span class="t" style="left:531px;top:151px;color:#fff">Surface With Edges</span>
<span class="t" style="left:531px;top:176px">Wireframe</span>
</div>
<!-- STATUS -->
<div id="status">
<div class="btn" style="left:609px;top:857px;width:20px;height:19px"></div>
<svg style="left:613px;top:861px" width="12" height="11" viewBox="0 0 12 11"><path d="M2 1.5l8 8M10 1.5l-8 8" stroke="#a9a9a9" stroke-width="3.2"/></svg>
<div class="a" style="left:631px;top:857px;width:583px;height:19px;border-top:1px solid #9c9c9c;border-left:1px solid #9c9c9c;border-bottom:1px solid #fff;border-right:1px solid #fff;background:#ededed"></div>
<div class="a" style="left:1226px;top:866px;width:11px;height:11px;background-image:radial-gradient(circle,#bdbdbd 0.7px,transparent 0.9px);background-size:3px 3px;clip-path:polygon(100% 0,100% 100%,0 100%)"></div>
</div>
</div>
</body></html>
